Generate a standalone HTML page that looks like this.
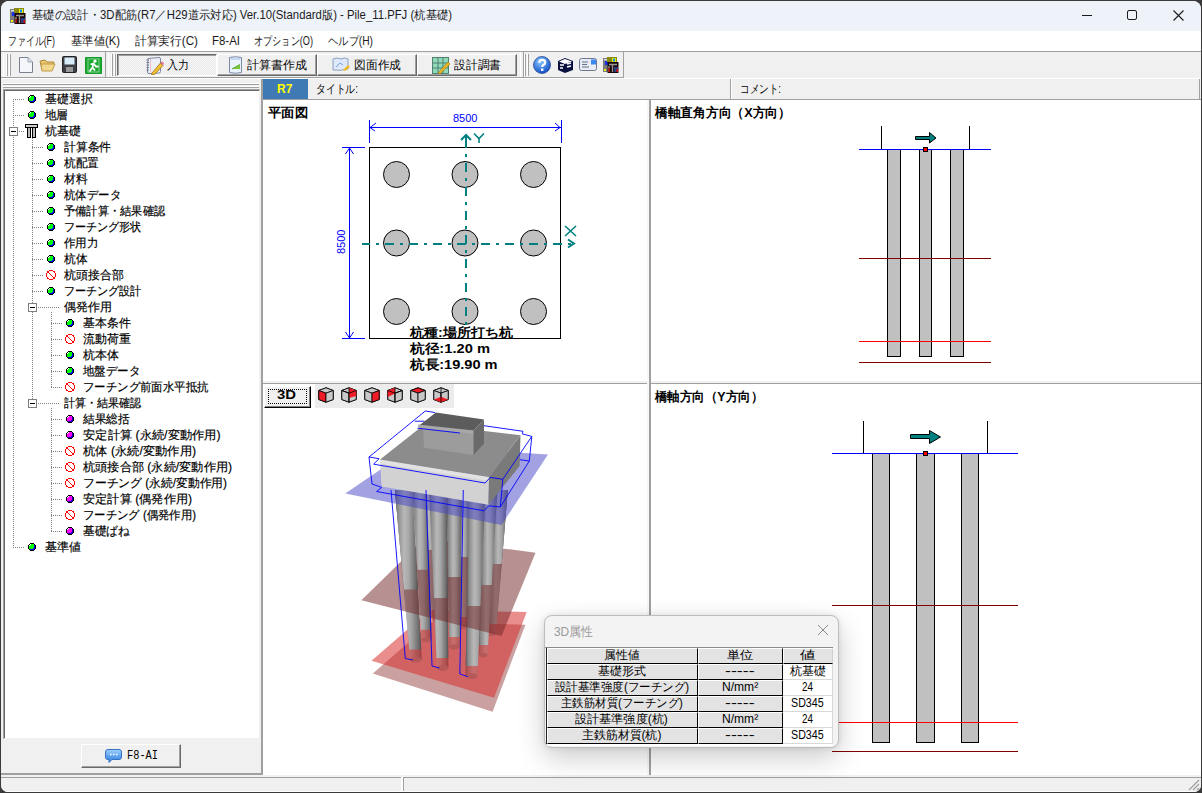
<!DOCTYPE html><html><head><meta charset="utf-8"><style>
*{box-sizing:border-box;margin:0;padding:0}
html,body{width:1202px;height:793px;overflow:hidden;background:#3a3a3a;font-family:"Liberation Sans",sans-serif;color:#000}
.a{position:absolute}
.t{position:absolute;white-space:nowrap;line-height:1;transform-origin:0 0}
#win{position:absolute;left:1px;top:1px;width:1200px;height:791px;background:#f0f0f0;border-radius:8px 8px 7px 7px;overflow:hidden}
.hl{position:absolute;height:1px}
.vl{position:absolute;width:1px}
</style></head><body><div id="win">
<div class="a" style="left:0px;top:0px;width:1200px;height:30px;background:#eef2f9"></div>
<div class="t" id="x1" style="left:31px;top:8px;font-size:12px;transform:scaleX(0.9448);color:#1b1b1b">基礎の設計・3D配筋(R7／H29道示対応) Ver.10(Standard版) - Pile_11.PFJ (杭基礎)</div>
<svg class="a" style="left:9px;top:7px;" width="16" height="16" viewBox="0 0 16 16"><rect x="0" y="1" width="8" height="14" fill="#7a7a7a"/><rect x="1" y="2" width="7" height="1.5" fill="#ddd"/><rect x="2" y="4" width="3" height="4" fill="#1530f0"/><rect x="1" y="12" width="2" height="2" fill="#ee0"/><rect x="4" y="0" width="10" height="5" fill="#8a8a10"/><rect x="9" y="1" width="4" height="4" fill="#ee0"/><rect x="10" y="1.5" width="2" height="3" fill="#18f"/><rect x="4.5" y="5" width="11" height="11" fill="#1a0808"/><path d="M6 9V15M9.5 7V15M6 7.5H14" stroke="#999" stroke-width="1.3"/><rect x="5.5" y="11" width="1.5" height="4" fill="#a00"/><rect x="11" y="10" width="4" height="5" fill="#2a3a80"/><rect x="13.5" y="12" width="1.5" height="3" fill="#d00"/></svg>
<div class="a" style="left:1081px;top:14px;width:10px;height:1px;background:#1b1b1b"></div>
<div class="a" style="left:1126px;top:9px;width:10px;height:10px;border:1px solid #1b1b1b;border-radius:2px"></div>
<svg class="a" style="left:1171px;top:8px" width="13" height="13"><path d="M1.5 1.5L11.5 11.5M11.5 1.5L1.5 11.5" stroke="#1b1b1b" stroke-width="1.1"/></svg>
<div class="a" style="left:0px;top:30px;width:1200px;height:20px;background:#fff"></div>
<div class="a" style="left:0px;top:50px;width:1200px;height:1px;background:#a0a0a0"></div>
<div class="t" id="x2" style="left:7px;top:34px;font-size:12px;transform:scaleX(0.7422);color:#1b1b1b">ファイル(F)</div>
<div class="t" id="x3" style="left:70px;top:34px;font-size:12px;transform:scaleX(0.9423);color:#1b1b1b">基準値(K)</div>
<div class="t" id="x4" style="left:134px;top:34px;font-size:12px;transform:scaleX(0.9741);color:#1b1b1b">計算実行(C)</div>
<div class="t" id="x5" style="left:211px;top:34px;font-size:12px;transform:scaleX(0.9542);color:#1b1b1b">F8-AI</div>
<div class="t" id="x6" style="left:253px;top:34px;font-size:12px;transform:scaleX(0.7630);color:#1b1b1b">オプション(O)</div>
<div class="t" id="x7" style="left:327px;top:34px;font-size:12px;transform:scaleX(0.8543);color:#1b1b1b">ヘルプ(H)</div>
<div class="a" style="left:0px;top:51px;width:1200px;height:25px;background:#f0f0f0"></div>
<div class="a" style="left:0px;top:76px;width:623px;height:1px;background:#a0a0a0"></div>
<div class="a" style="left:0px;top:77px;width:1200px;height:1px;background:#fff"></div>
<div class="a" style="left:2px;top:51px;width:103px;height:25px;border-right:1px solid #a0a0a0;border-left:1px solid #fff"></div>
<div class="a" style="left:107px;top:51px;width:416px;height:25px;border-right:1px solid #a0a0a0;border-left:1px solid #fff"></div>
<div class="a" style="left:519px;top:51px;width:104px;height:25px;border-right:1px solid #a0a0a0;border-left:1px solid #fff"></div>
<div class="a" style="left:5px;top:53px;width:2px;height:22px;border-left:1px solid #fff;border-right:1px solid #a0a0a0"></div>
<div class="a" style="left:8px;top:53px;width:2px;height:22px;border-left:1px solid #fff;border-right:1px solid #a0a0a0"></div>
<div class="a" style="left:110px;top:53px;width:2px;height:22px;border-left:1px solid #fff;border-right:1px solid #a0a0a0"></div>
<div class="a" style="left:113px;top:53px;width:2px;height:22px;border-left:1px solid #fff;border-right:1px solid #a0a0a0"></div>
<div class="a" style="left:523px;top:53px;width:2px;height:22px;border-left:1px solid #fff;border-right:1px solid #a0a0a0"></div>
<div class="a" style="left:526px;top:53px;width:2px;height:22px;border-left:1px solid #fff;border-right:1px solid #a0a0a0"></div>
<svg class="a" style="left:17px;top:55px;" width="16" height="18" viewBox="0 0 16 18"><path d="M1.5 1.5H10L14.5 6V16.5H1.5Z" fill="#f4f6fc" stroke="#7a8090"/><path d="M10 1.5V6H14.5" fill="#dde" stroke="#9aa"/></svg>
<svg class="a" style="left:38px;top:55px;" width="17" height="17" viewBox="0 0 17 17"><path d="M1 5L6 4L8 6H15L13 14H3Z" fill="#e8c46a" stroke="#b08a3a"/><path d="M2 8H16L13 15H3Z" fill="#f2d88c" stroke="#c09a4a"/></svg>
<svg class="a" style="left:61px;top:55px;" width="16" height="18" viewBox="0 0 16 18"><rect x="0.5" y="0.5" width="14" height="16" rx="1" fill="#3c4046" stroke="#222"/><rect x="2.5" y="1.5" width="10" height="7" fill="#d8ecf8"/><rect x="4" y="11" width="7" height="5" fill="#999"/></svg>
<svg class="a" style="left:84px;top:56px;" width="17" height="17" viewBox="0 0 17 17"><rect x="0" y="0" width="17" height="17" rx="1" fill="#149a28"/><rect x="1" y="1" width="15" height="15" fill="#1aa830"/><rect x="3" y="2" width="11" height="13" fill="none" stroke="#fff" stroke-width=".8" opacity=".6"/><circle cx="10" cy="4.2" r="1.6" fill="#fff"/><path d="M5.5 7.5L8.5 6.5L11 9.5L13.5 9.5M8.5 6.5L7.5 10.5L10 13.5M7.5 10.5L4.5 14.5" stroke="#fff" stroke-width="1.8" fill="none"/></svg>
<div class="a" style="left:116px;top:53px;width:100px;height:22px;border-top:1px solid #696969;border-left:1px solid #696969;border-right:1px solid #fff;border-bottom:1px solid #fff;background:repeating-conic-gradient(#fafafa 0 25%,#e6e6e6 0 50%) 0 0/2px 2px"></div>
<div class="a" style="left:117px;top:54px;width:98px;height:20px;border-top:1px solid #a0a0a0;border-left:1px solid #a0a0a0"></div>
<div class="a" style="left:216px;top:53px;width:100px;height:22px;background:#f0f0f0;border-top:1px solid #fff;border-left:1px solid #fff;border-right:1px solid #696969;border-bottom:1px solid #696969"></div>
<div class="a" style="left:217px;top:54px;width:98px;height:20px;border-right:1px solid #a0a0a0;border-bottom:1px solid #a0a0a0"></div>
<div class="a" style="left:316px;top:53px;width:100px;height:22px;background:#f0f0f0;border-top:1px solid #fff;border-left:1px solid #fff;border-right:1px solid #696969;border-bottom:1px solid #696969"></div>
<div class="a" style="left:317px;top:54px;width:98px;height:20px;border-right:1px solid #a0a0a0;border-bottom:1px solid #a0a0a0"></div>
<div class="a" style="left:416px;top:53px;width:100px;height:22px;background:#f0f0f0;border-top:1px solid #fff;border-left:1px solid #fff;border-right:1px solid #696969;border-bottom:1px solid #696969"></div>
<div class="a" style="left:417px;top:54px;width:98px;height:20px;border-right:1px solid #a0a0a0;border-bottom:1px solid #a0a0a0"></div>
<svg class="a" style="left:144px;top:55px;" width="19" height="19" viewBox="0 0 19 19"><path d="M3 2.5L14 1.5Q15.5 1.5 15.5 3V15.5Q15.5 17 14 17L4 17.5Q2.5 17.5 2.5 16Z" fill="#eef0f8" stroke="#8088a0"/><path d="M1.5 4h2.5M1.5 6.5h2.5M1.5 9h2.5M1.5 11.5h2.5M1.5 14h2.5" stroke="#6a7088" stroke-width=".9"/><path d="M5.5 3V16" stroke="#e8a0a0" stroke-width=".6"/><path d="M7 17L15.5 7L18 9.5L9.5 18.5L6.5 19Z" fill="#f2c030" stroke="#906010" stroke-width=".7"/><path d="M15.5 7L17 5.2L19 7.5L18 9.5Z" fill="#e07090"/></svg>
<div class="t" id="x8" style="left:166px;top:58px;font-size:12px;transform:scaleX(0.9167);">入力</div>
<svg class="a" style="left:226px;top:55px;" width="17" height="18" viewBox="0 0 17 18"><path d="M2.5 1.5Q8.5 0 14.5 1.5V16.5Q8.5 18 2.5 16.5Z" fill="#eaf2fc" stroke="#7a8aa8"/><path d="M3.5 3H13.5" stroke="#b8d0f0" stroke-width="1.5"/><path d="M5 13L13 8.5V13Z" fill="#7cc83a"/><path d="M5 13L13 8.5" stroke="#3a9a1a" stroke-width=".8"/></svg>
<div class="t" id="x9" style="left:246px;top:58px;font-size:12px;transform:scaleX(1.0000);">計算書作成</div>
<svg class="a" style="left:330px;top:56px;" width="20" height="15" viewBox="0 0 20 15"><path d="M2 2Q6 0 10 2Q14 0 17 2V12Q10 14 2 13Z" fill="#dfe8f8" stroke="#8aa0c0"/><path d="M5 10L9 6L12 8" stroke="#6fa0e0" fill="none"/><path d="M12 13L17 8L19 10L14 14Z" fill="#f0b820"/></svg>
<div class="t" id="x10" style="left:353px;top:58px;font-size:12px;transform:scaleX(0.9792);">図面作成</div>
<svg class="a" style="left:431px;top:56px;" width="19" height="17" viewBox="0 0 19 17"><rect x="0.5" y="0.5" width="16" height="16" fill="#8fd8b8" stroke="#508070"/><path d="M6 0V17M11 0V17M0 6H17M0 11H17" stroke="#508070"/><path d="M6 16L16 5L18 7L8 17Z" fill="#f0b820" stroke="#a07010" stroke-width=".6"/></svg>
<div class="t" id="x11" style="left:453px;top:58px;font-size:12px;transform:scaleX(0.9792);">設計調書</div>
<svg class="a" style="left:532px;top:55px;" width="19" height="19" viewBox="0 0 19 19"><defs><radialGradient id="hg" cx="40%" cy="30%" r="70%"><stop offset="0" stop-color="#8cc8ff"/><stop offset="1" stop-color="#1250c8"/></radialGradient></defs><circle cx="9" cy="9" r="8.5" fill="url(#hg)" stroke="#2a4a90" stroke-width=".8"/><path d="M6.2 6.8Q6.2 3.8 9.2 3.8Q12.2 3.8 12.2 6.4Q12.2 8 10.2 9Q9.2 9.6 9.2 11" stroke="#fff" stroke-width="2.2" fill="none"/><rect x="8" y="12.5" width="2.4" height="2.4" fill="#fff"/></svg>
<svg class="a" style="left:556px;top:56px;" width="17" height="17" viewBox="0 0 17 17"><path d="M8 1L16 4V13L8 16L1 13V4Z" fill="#0a1040"/><path d="M8 2L15 4.5L8 7L2 4.5Z" fill="#fff"/><path d="M3 8H7M3 11H6M10 7L14 6M10 10L14 9" stroke="#fff" stroke-width="1.3"/></svg>
<svg class="a" style="left:578px;top:57px;" width="18" height="14" viewBox="0 0 18 14"><rect x="0.5" y="0.5" width="17" height="12" rx="2" fill="#e8ecf6" stroke="#707890"/><rect x="12" y="1.5" width="5" height="5" fill="#3a8af0"/><path d="M3 4H9M3 6.5H8M3 9H10" stroke="#6a7080"/></svg>
<svg class="a" style="left:602px;top:56px;" width="16" height="16" viewBox="0 0 16 16"><rect x="0" y="1" width="8" height="14" fill="#7a7a7a"/><rect x="1" y="2" width="7" height="1.5" fill="#ddd"/><rect x="2" y="4" width="3" height="4" fill="#1530f0"/><rect x="1" y="12" width="2" height="2" fill="#ee0"/><rect x="4" y="0" width="10" height="5" fill="#8a8a10"/><rect x="9" y="1" width="4" height="4" fill="#ee0"/><rect x="10" y="1.5" width="2" height="3" fill="#18f"/><rect x="4.5" y="5" width="11" height="11" fill="#1a0808"/><path d="M6 9V15M9.5 7V15M6 7.5H14" stroke="#999" stroke-width="1.3"/><rect x="5.5" y="11" width="1.5" height="4" fill="#a00"/><rect x="11" y="10" width="4" height="5" fill="#2a3a80"/><rect x="13.5" y="12" width="1.5" height="3" fill="#d00"/></svg>
<div class="a" style="left:2px;top:82px;width:256px;height:2px;border-top:1px solid #fff;border-bottom:1px solid #a0a0a0"></div>
<div class="a" style="left:2px;top:85px;width:256px;height:2px;border-top:1px solid #fff;border-bottom:1px solid #a0a0a0"></div>
<div class="a" style="left:0px;top:78px;width:262px;height:696px;border-right:2px solid #a0a0a0;border-bottom:2px solid #a0a0a0"></div>
<div class="a" style="left:2px;top:88px;width:257px;height:650px;background:#fff;border-top:2px solid #a0a0a0;border-left:2px solid #a0a0a0;border-right:1px solid #f0f0f0;border-bottom:1px solid #f0f0f0"></div>
<div class="a" style="left:3px;top:89px;width:255px;height:648px;border-top:1px solid #696969;border-left:1px solid #696969"></div>
<svg class="a" style="left:27px;top:94px;" width="8" height="8" viewBox="0 0 8 8"><g shape-rendering="crispEdges"><rect x="2" y="0" width="1" height="1" fill="#000"/><rect x="3" y="0" width="1" height="1" fill="#000"/><rect x="4" y="0" width="1" height="1" fill="#000"/><rect x="5" y="0" width="1" height="1" fill="#000"/><rect x="1" y="1" width="1" height="1" fill="#000"/><rect x="2" y="1" width="1" height="1" fill="#fff"/><rect x="3" y="1" width="1" height="1" fill="#00ff00"/><rect x="4" y="1" width="1" height="1" fill="#00ff00"/><rect x="5" y="1" width="1" height="1" fill="#00ff00"/><rect x="6" y="1" width="1" height="1" fill="#000"/><rect x="0" y="2" width="1" height="1" fill="#000"/><rect x="1" y="2" width="1" height="1" fill="#fff"/><rect x="2" y="2" width="1" height="1" fill="#00ff00"/><rect x="3" y="2" width="1" height="1" fill="#00ff00"/><rect x="4" y="2" width="1" height="1" fill="#00ff00"/><rect x="5" y="2" width="1" height="1" fill="#00ff00"/><rect x="6" y="2" width="1" height="1" fill="#0000ff"/><rect x="7" y="2" width="1" height="1" fill="#000"/><rect x="0" y="3" width="1" height="1" fill="#000"/><rect x="1" y="3" width="1" height="1" fill="#00ff00"/><rect x="2" y="3" width="1" height="1" fill="#00ff00"/><rect x="3" y="3" width="1" height="1" fill="#00ff00"/><rect x="4" y="3" width="1" height="1" fill="#00ff00"/><rect x="5" y="3" width="1" height="1" fill="#00ff00"/><rect x="6" y="3" width="1" height="1" fill="#0000ff"/><rect x="7" y="3" width="1" height="1" fill="#000"/><rect x="0" y="4" width="1" height="1" fill="#000"/><rect x="1" y="4" width="1" height="1" fill="#00ff00"/><rect x="2" y="4" width="1" height="1" fill="#00ff00"/><rect x="3" y="4" width="1" height="1" fill="#00ff00"/><rect x="4" y="4" width="1" height="1" fill="#00ff00"/><rect x="5" y="4" width="1" height="1" fill="#00ff00"/><rect x="6" y="4" width="1" height="1" fill="#0000ff"/><rect x="7" y="4" width="1" height="1" fill="#000"/><rect x="0" y="5" width="1" height="1" fill="#000"/><rect x="1" y="5" width="1" height="1" fill="#00ff00"/><rect x="2" y="5" width="1" height="1" fill="#00ff00"/><rect x="3" y="5" width="1" height="1" fill="#00ff00"/><rect x="4" y="5" width="1" height="1" fill="#00ff00"/><rect x="5" y="5" width="1" height="1" fill="#0000ff"/><rect x="6" y="5" width="1" height="1" fill="#0000ff"/><rect x="7" y="5" width="1" height="1" fill="#000"/><rect x="1" y="6" width="1" height="1" fill="#000"/><rect x="2" y="6" width="1" height="1" fill="#0000ff"/><rect x="3" y="6" width="1" height="1" fill="#0000ff"/><rect x="4" y="6" width="1" height="1" fill="#0000ff"/><rect x="5" y="6" width="1" height="1" fill="#0000ff"/><rect x="6" y="6" width="1" height="1" fill="#000"/><rect x="2" y="7" width="1" height="1" fill="#000"/><rect x="3" y="7" width="1" height="1" fill="#000"/><rect x="4" y="7" width="1" height="1" fill="#000"/><rect x="5" y="7" width="1" height="1" fill="#000"/></g></svg>
<div class="t" id="x12" style="left:44px;top:92px;font-size:12px;transform:scaleX(0.9917);-webkit-text-stroke:.18px #000">基礎選択</div>
<svg class="a" style="left:27px;top:110px;" width="8" height="8" viewBox="0 0 8 8"><g shape-rendering="crispEdges"><rect x="2" y="0" width="1" height="1" fill="#000"/><rect x="3" y="0" width="1" height="1" fill="#000"/><rect x="4" y="0" width="1" height="1" fill="#000"/><rect x="5" y="0" width="1" height="1" fill="#000"/><rect x="1" y="1" width="1" height="1" fill="#000"/><rect x="2" y="1" width="1" height="1" fill="#fff"/><rect x="3" y="1" width="1" height="1" fill="#00ff00"/><rect x="4" y="1" width="1" height="1" fill="#00ff00"/><rect x="5" y="1" width="1" height="1" fill="#00ff00"/><rect x="6" y="1" width="1" height="1" fill="#000"/><rect x="0" y="2" width="1" height="1" fill="#000"/><rect x="1" y="2" width="1" height="1" fill="#fff"/><rect x="2" y="2" width="1" height="1" fill="#00ff00"/><rect x="3" y="2" width="1" height="1" fill="#00ff00"/><rect x="4" y="2" width="1" height="1" fill="#00ff00"/><rect x="5" y="2" width="1" height="1" fill="#00ff00"/><rect x="6" y="2" width="1" height="1" fill="#0000ff"/><rect x="7" y="2" width="1" height="1" fill="#000"/><rect x="0" y="3" width="1" height="1" fill="#000"/><rect x="1" y="3" width="1" height="1" fill="#00ff00"/><rect x="2" y="3" width="1" height="1" fill="#00ff00"/><rect x="3" y="3" width="1" height="1" fill="#00ff00"/><rect x="4" y="3" width="1" height="1" fill="#00ff00"/><rect x="5" y="3" width="1" height="1" fill="#00ff00"/><rect x="6" y="3" width="1" height="1" fill="#0000ff"/><rect x="7" y="3" width="1" height="1" fill="#000"/><rect x="0" y="4" width="1" height="1" fill="#000"/><rect x="1" y="4" width="1" height="1" fill="#00ff00"/><rect x="2" y="4" width="1" height="1" fill="#00ff00"/><rect x="3" y="4" width="1" height="1" fill="#00ff00"/><rect x="4" y="4" width="1" height="1" fill="#00ff00"/><rect x="5" y="4" width="1" height="1" fill="#00ff00"/><rect x="6" y="4" width="1" height="1" fill="#0000ff"/><rect x="7" y="4" width="1" height="1" fill="#000"/><rect x="0" y="5" width="1" height="1" fill="#000"/><rect x="1" y="5" width="1" height="1" fill="#00ff00"/><rect x="2" y="5" width="1" height="1" fill="#00ff00"/><rect x="3" y="5" width="1" height="1" fill="#00ff00"/><rect x="4" y="5" width="1" height="1" fill="#00ff00"/><rect x="5" y="5" width="1" height="1" fill="#0000ff"/><rect x="6" y="5" width="1" height="1" fill="#0000ff"/><rect x="7" y="5" width="1" height="1" fill="#000"/><rect x="1" y="6" width="1" height="1" fill="#000"/><rect x="2" y="6" width="1" height="1" fill="#0000ff"/><rect x="3" y="6" width="1" height="1" fill="#0000ff"/><rect x="4" y="6" width="1" height="1" fill="#0000ff"/><rect x="5" y="6" width="1" height="1" fill="#0000ff"/><rect x="6" y="6" width="1" height="1" fill="#000"/><rect x="2" y="7" width="1" height="1" fill="#000"/><rect x="3" y="7" width="1" height="1" fill="#000"/><rect x="4" y="7" width="1" height="1" fill="#000"/><rect x="5" y="7" width="1" height="1" fill="#000"/></g></svg>
<div class="t" id="x13" style="left:44px;top:108px;font-size:12px;transform:scaleX(0.9583);-webkit-text-stroke:.18px #000">地層</div>
<svg class="a" style="left:24px;top:123px;" width="13" height="14" viewBox="0 0 13 14"><rect x="0.5" y="0.5" width="12" height="3" fill="#ccc" stroke="#000"/><rect x="2.5" y="3.5" width="3" height="10" fill="#bbb" stroke="#000"/><rect x="7.5" y="3.5" width="3" height="10" fill="#bbb" stroke="#000"/></svg>
<div class="t" id="x14" style="left:44px;top:124px;font-size:12px;transform:scaleX(0.9861);-webkit-text-stroke:.18px #000">杭基礎</div>
<svg class="a" style="left:46px;top:142px;" width="8" height="8" viewBox="0 0 8 8"><g shape-rendering="crispEdges"><rect x="2" y="0" width="1" height="1" fill="#000"/><rect x="3" y="0" width="1" height="1" fill="#000"/><rect x="4" y="0" width="1" height="1" fill="#000"/><rect x="5" y="0" width="1" height="1" fill="#000"/><rect x="1" y="1" width="1" height="1" fill="#000"/><rect x="2" y="1" width="1" height="1" fill="#fff"/><rect x="3" y="1" width="1" height="1" fill="#00ff00"/><rect x="4" y="1" width="1" height="1" fill="#00ff00"/><rect x="5" y="1" width="1" height="1" fill="#00ff00"/><rect x="6" y="1" width="1" height="1" fill="#000"/><rect x="0" y="2" width="1" height="1" fill="#000"/><rect x="1" y="2" width="1" height="1" fill="#fff"/><rect x="2" y="2" width="1" height="1" fill="#00ff00"/><rect x="3" y="2" width="1" height="1" fill="#00ff00"/><rect x="4" y="2" width="1" height="1" fill="#00ff00"/><rect x="5" y="2" width="1" height="1" fill="#00ff00"/><rect x="6" y="2" width="1" height="1" fill="#0000ff"/><rect x="7" y="2" width="1" height="1" fill="#000"/><rect x="0" y="3" width="1" height="1" fill="#000"/><rect x="1" y="3" width="1" height="1" fill="#00ff00"/><rect x="2" y="3" width="1" height="1" fill="#00ff00"/><rect x="3" y="3" width="1" height="1" fill="#00ff00"/><rect x="4" y="3" width="1" height="1" fill="#00ff00"/><rect x="5" y="3" width="1" height="1" fill="#00ff00"/><rect x="6" y="3" width="1" height="1" fill="#0000ff"/><rect x="7" y="3" width="1" height="1" fill="#000"/><rect x="0" y="4" width="1" height="1" fill="#000"/><rect x="1" y="4" width="1" height="1" fill="#00ff00"/><rect x="2" y="4" width="1" height="1" fill="#00ff00"/><rect x="3" y="4" width="1" height="1" fill="#00ff00"/><rect x="4" y="4" width="1" height="1" fill="#00ff00"/><rect x="5" y="4" width="1" height="1" fill="#00ff00"/><rect x="6" y="4" width="1" height="1" fill="#0000ff"/><rect x="7" y="4" width="1" height="1" fill="#000"/><rect x="0" y="5" width="1" height="1" fill="#000"/><rect x="1" y="5" width="1" height="1" fill="#00ff00"/><rect x="2" y="5" width="1" height="1" fill="#00ff00"/><rect x="3" y="5" width="1" height="1" fill="#00ff00"/><rect x="4" y="5" width="1" height="1" fill="#00ff00"/><rect x="5" y="5" width="1" height="1" fill="#0000ff"/><rect x="6" y="5" width="1" height="1" fill="#0000ff"/><rect x="7" y="5" width="1" height="1" fill="#000"/><rect x="1" y="6" width="1" height="1" fill="#000"/><rect x="2" y="6" width="1" height="1" fill="#0000ff"/><rect x="3" y="6" width="1" height="1" fill="#0000ff"/><rect x="4" y="6" width="1" height="1" fill="#0000ff"/><rect x="5" y="6" width="1" height="1" fill="#0000ff"/><rect x="6" y="6" width="1" height="1" fill="#000"/><rect x="2" y="7" width="1" height="1" fill="#000"/><rect x="3" y="7" width="1" height="1" fill="#000"/><rect x="4" y="7" width="1" height="1" fill="#000"/><rect x="5" y="7" width="1" height="1" fill="#000"/></g></svg>
<div class="t" id="x15" style="left:63px;top:140px;font-size:12px;transform:scaleX(0.9792);-webkit-text-stroke:.18px #000">計算条件</div>
<svg class="a" style="left:46px;top:158px;" width="8" height="8" viewBox="0 0 8 8"><g shape-rendering="crispEdges"><rect x="2" y="0" width="1" height="1" fill="#000"/><rect x="3" y="0" width="1" height="1" fill="#000"/><rect x="4" y="0" width="1" height="1" fill="#000"/><rect x="5" y="0" width="1" height="1" fill="#000"/><rect x="1" y="1" width="1" height="1" fill="#000"/><rect x="2" y="1" width="1" height="1" fill="#fff"/><rect x="3" y="1" width="1" height="1" fill="#00ff00"/><rect x="4" y="1" width="1" height="1" fill="#00ff00"/><rect x="5" y="1" width="1" height="1" fill="#00ff00"/><rect x="6" y="1" width="1" height="1" fill="#000"/><rect x="0" y="2" width="1" height="1" fill="#000"/><rect x="1" y="2" width="1" height="1" fill="#fff"/><rect x="2" y="2" width="1" height="1" fill="#00ff00"/><rect x="3" y="2" width="1" height="1" fill="#00ff00"/><rect x="4" y="2" width="1" height="1" fill="#00ff00"/><rect x="5" y="2" width="1" height="1" fill="#00ff00"/><rect x="6" y="2" width="1" height="1" fill="#0000ff"/><rect x="7" y="2" width="1" height="1" fill="#000"/><rect x="0" y="3" width="1" height="1" fill="#000"/><rect x="1" y="3" width="1" height="1" fill="#00ff00"/><rect x="2" y="3" width="1" height="1" fill="#00ff00"/><rect x="3" y="3" width="1" height="1" fill="#00ff00"/><rect x="4" y="3" width="1" height="1" fill="#00ff00"/><rect x="5" y="3" width="1" height="1" fill="#00ff00"/><rect x="6" y="3" width="1" height="1" fill="#0000ff"/><rect x="7" y="3" width="1" height="1" fill="#000"/><rect x="0" y="4" width="1" height="1" fill="#000"/><rect x="1" y="4" width="1" height="1" fill="#00ff00"/><rect x="2" y="4" width="1" height="1" fill="#00ff00"/><rect x="3" y="4" width="1" height="1" fill="#00ff00"/><rect x="4" y="4" width="1" height="1" fill="#00ff00"/><rect x="5" y="4" width="1" height="1" fill="#00ff00"/><rect x="6" y="4" width="1" height="1" fill="#0000ff"/><rect x="7" y="4" width="1" height="1" fill="#000"/><rect x="0" y="5" width="1" height="1" fill="#000"/><rect x="1" y="5" width="1" height="1" fill="#00ff00"/><rect x="2" y="5" width="1" height="1" fill="#00ff00"/><rect x="3" y="5" width="1" height="1" fill="#00ff00"/><rect x="4" y="5" width="1" height="1" fill="#00ff00"/><rect x="5" y="5" width="1" height="1" fill="#0000ff"/><rect x="6" y="5" width="1" height="1" fill="#0000ff"/><rect x="7" y="5" width="1" height="1" fill="#000"/><rect x="1" y="6" width="1" height="1" fill="#000"/><rect x="2" y="6" width="1" height="1" fill="#0000ff"/><rect x="3" y="6" width="1" height="1" fill="#0000ff"/><rect x="4" y="6" width="1" height="1" fill="#0000ff"/><rect x="5" y="6" width="1" height="1" fill="#0000ff"/><rect x="6" y="6" width="1" height="1" fill="#000"/><rect x="2" y="7" width="1" height="1" fill="#000"/><rect x="3" y="7" width="1" height="1" fill="#000"/><rect x="4" y="7" width="1" height="1" fill="#000"/><rect x="5" y="7" width="1" height="1" fill="#000"/></g></svg>
<div class="t" id="x16" style="left:63px;top:156px;font-size:12px;transform:scaleX(0.9722);-webkit-text-stroke:.18px #000">杭配置</div>
<svg class="a" style="left:46px;top:174px;" width="8" height="8" viewBox="0 0 8 8"><g shape-rendering="crispEdges"><rect x="2" y="0" width="1" height="1" fill="#000"/><rect x="3" y="0" width="1" height="1" fill="#000"/><rect x="4" y="0" width="1" height="1" fill="#000"/><rect x="5" y="0" width="1" height="1" fill="#000"/><rect x="1" y="1" width="1" height="1" fill="#000"/><rect x="2" y="1" width="1" height="1" fill="#fff"/><rect x="3" y="1" width="1" height="1" fill="#00ff00"/><rect x="4" y="1" width="1" height="1" fill="#00ff00"/><rect x="5" y="1" width="1" height="1" fill="#00ff00"/><rect x="6" y="1" width="1" height="1" fill="#000"/><rect x="0" y="2" width="1" height="1" fill="#000"/><rect x="1" y="2" width="1" height="1" fill="#fff"/><rect x="2" y="2" width="1" height="1" fill="#00ff00"/><rect x="3" y="2" width="1" height="1" fill="#00ff00"/><rect x="4" y="2" width="1" height="1" fill="#00ff00"/><rect x="5" y="2" width="1" height="1" fill="#00ff00"/><rect x="6" y="2" width="1" height="1" fill="#0000ff"/><rect x="7" y="2" width="1" height="1" fill="#000"/><rect x="0" y="3" width="1" height="1" fill="#000"/><rect x="1" y="3" width="1" height="1" fill="#00ff00"/><rect x="2" y="3" width="1" height="1" fill="#00ff00"/><rect x="3" y="3" width="1" height="1" fill="#00ff00"/><rect x="4" y="3" width="1" height="1" fill="#00ff00"/><rect x="5" y="3" width="1" height="1" fill="#00ff00"/><rect x="6" y="3" width="1" height="1" fill="#0000ff"/><rect x="7" y="3" width="1" height="1" fill="#000"/><rect x="0" y="4" width="1" height="1" fill="#000"/><rect x="1" y="4" width="1" height="1" fill="#00ff00"/><rect x="2" y="4" width="1" height="1" fill="#00ff00"/><rect x="3" y="4" width="1" height="1" fill="#00ff00"/><rect x="4" y="4" width="1" height="1" fill="#00ff00"/><rect x="5" y="4" width="1" height="1" fill="#00ff00"/><rect x="6" y="4" width="1" height="1" fill="#0000ff"/><rect x="7" y="4" width="1" height="1" fill="#000"/><rect x="0" y="5" width="1" height="1" fill="#000"/><rect x="1" y="5" width="1" height="1" fill="#00ff00"/><rect x="2" y="5" width="1" height="1" fill="#00ff00"/><rect x="3" y="5" width="1" height="1" fill="#00ff00"/><rect x="4" y="5" width="1" height="1" fill="#00ff00"/><rect x="5" y="5" width="1" height="1" fill="#0000ff"/><rect x="6" y="5" width="1" height="1" fill="#0000ff"/><rect x="7" y="5" width="1" height="1" fill="#000"/><rect x="1" y="6" width="1" height="1" fill="#000"/><rect x="2" y="6" width="1" height="1" fill="#0000ff"/><rect x="3" y="6" width="1" height="1" fill="#0000ff"/><rect x="4" y="6" width="1" height="1" fill="#0000ff"/><rect x="5" y="6" width="1" height="1" fill="#0000ff"/><rect x="6" y="6" width="1" height="1" fill="#000"/><rect x="2" y="7" width="1" height="1" fill="#000"/><rect x="3" y="7" width="1" height="1" fill="#000"/><rect x="4" y="7" width="1" height="1" fill="#000"/><rect x="5" y="7" width="1" height="1" fill="#000"/></g></svg>
<div class="t" id="x17" style="left:63px;top:172px;font-size:12px;transform:scaleX(0.9750);-webkit-text-stroke:.18px #000">材料</div>
<svg class="a" style="left:46px;top:190px;" width="8" height="8" viewBox="0 0 8 8"><g shape-rendering="crispEdges"><rect x="2" y="0" width="1" height="1" fill="#000"/><rect x="3" y="0" width="1" height="1" fill="#000"/><rect x="4" y="0" width="1" height="1" fill="#000"/><rect x="5" y="0" width="1" height="1" fill="#000"/><rect x="1" y="1" width="1" height="1" fill="#000"/><rect x="2" y="1" width="1" height="1" fill="#fff"/><rect x="3" y="1" width="1" height="1" fill="#00ff00"/><rect x="4" y="1" width="1" height="1" fill="#00ff00"/><rect x="5" y="1" width="1" height="1" fill="#00ff00"/><rect x="6" y="1" width="1" height="1" fill="#000"/><rect x="0" y="2" width="1" height="1" fill="#000"/><rect x="1" y="2" width="1" height="1" fill="#fff"/><rect x="2" y="2" width="1" height="1" fill="#00ff00"/><rect x="3" y="2" width="1" height="1" fill="#00ff00"/><rect x="4" y="2" width="1" height="1" fill="#00ff00"/><rect x="5" y="2" width="1" height="1" fill="#00ff00"/><rect x="6" y="2" width="1" height="1" fill="#0000ff"/><rect x="7" y="2" width="1" height="1" fill="#000"/><rect x="0" y="3" width="1" height="1" fill="#000"/><rect x="1" y="3" width="1" height="1" fill="#00ff00"/><rect x="2" y="3" width="1" height="1" fill="#00ff00"/><rect x="3" y="3" width="1" height="1" fill="#00ff00"/><rect x="4" y="3" width="1" height="1" fill="#00ff00"/><rect x="5" y="3" width="1" height="1" fill="#00ff00"/><rect x="6" y="3" width="1" height="1" fill="#0000ff"/><rect x="7" y="3" width="1" height="1" fill="#000"/><rect x="0" y="4" width="1" height="1" fill="#000"/><rect x="1" y="4" width="1" height="1" fill="#00ff00"/><rect x="2" y="4" width="1" height="1" fill="#00ff00"/><rect x="3" y="4" width="1" height="1" fill="#00ff00"/><rect x="4" y="4" width="1" height="1" fill="#00ff00"/><rect x="5" y="4" width="1" height="1" fill="#00ff00"/><rect x="6" y="4" width="1" height="1" fill="#0000ff"/><rect x="7" y="4" width="1" height="1" fill="#000"/><rect x="0" y="5" width="1" height="1" fill="#000"/><rect x="1" y="5" width="1" height="1" fill="#00ff00"/><rect x="2" y="5" width="1" height="1" fill="#00ff00"/><rect x="3" y="5" width="1" height="1" fill="#00ff00"/><rect x="4" y="5" width="1" height="1" fill="#00ff00"/><rect x="5" y="5" width="1" height="1" fill="#0000ff"/><rect x="6" y="5" width="1" height="1" fill="#0000ff"/><rect x="7" y="5" width="1" height="1" fill="#000"/><rect x="1" y="6" width="1" height="1" fill="#000"/><rect x="2" y="6" width="1" height="1" fill="#0000ff"/><rect x="3" y="6" width="1" height="1" fill="#0000ff"/><rect x="4" y="6" width="1" height="1" fill="#0000ff"/><rect x="5" y="6" width="1" height="1" fill="#0000ff"/><rect x="6" y="6" width="1" height="1" fill="#000"/><rect x="2" y="7" width="1" height="1" fill="#000"/><rect x="3" y="7" width="1" height="1" fill="#000"/><rect x="4" y="7" width="1" height="1" fill="#000"/><rect x="5" y="7" width="1" height="1" fill="#000"/></g></svg>
<div class="t" id="x18" style="left:63px;top:188px;font-size:12px;transform:scaleX(0.9500);-webkit-text-stroke:.18px #000">杭体データ</div>
<svg class="a" style="left:46px;top:206px;" width="8" height="8" viewBox="0 0 8 8"><g shape-rendering="crispEdges"><rect x="2" y="0" width="1" height="1" fill="#000"/><rect x="3" y="0" width="1" height="1" fill="#000"/><rect x="4" y="0" width="1" height="1" fill="#000"/><rect x="5" y="0" width="1" height="1" fill="#000"/><rect x="1" y="1" width="1" height="1" fill="#000"/><rect x="2" y="1" width="1" height="1" fill="#fff"/><rect x="3" y="1" width="1" height="1" fill="#00ff00"/><rect x="4" y="1" width="1" height="1" fill="#00ff00"/><rect x="5" y="1" width="1" height="1" fill="#00ff00"/><rect x="6" y="1" width="1" height="1" fill="#000"/><rect x="0" y="2" width="1" height="1" fill="#000"/><rect x="1" y="2" width="1" height="1" fill="#fff"/><rect x="2" y="2" width="1" height="1" fill="#00ff00"/><rect x="3" y="2" width="1" height="1" fill="#00ff00"/><rect x="4" y="2" width="1" height="1" fill="#00ff00"/><rect x="5" y="2" width="1" height="1" fill="#00ff00"/><rect x="6" y="2" width="1" height="1" fill="#0000ff"/><rect x="7" y="2" width="1" height="1" fill="#000"/><rect x="0" y="3" width="1" height="1" fill="#000"/><rect x="1" y="3" width="1" height="1" fill="#00ff00"/><rect x="2" y="3" width="1" height="1" fill="#00ff00"/><rect x="3" y="3" width="1" height="1" fill="#00ff00"/><rect x="4" y="3" width="1" height="1" fill="#00ff00"/><rect x="5" y="3" width="1" height="1" fill="#00ff00"/><rect x="6" y="3" width="1" height="1" fill="#0000ff"/><rect x="7" y="3" width="1" height="1" fill="#000"/><rect x="0" y="4" width="1" height="1" fill="#000"/><rect x="1" y="4" width="1" height="1" fill="#00ff00"/><rect x="2" y="4" width="1" height="1" fill="#00ff00"/><rect x="3" y="4" width="1" height="1" fill="#00ff00"/><rect x="4" y="4" width="1" height="1" fill="#00ff00"/><rect x="5" y="4" width="1" height="1" fill="#00ff00"/><rect x="6" y="4" width="1" height="1" fill="#0000ff"/><rect x="7" y="4" width="1" height="1" fill="#000"/><rect x="0" y="5" width="1" height="1" fill="#000"/><rect x="1" y="5" width="1" height="1" fill="#00ff00"/><rect x="2" y="5" width="1" height="1" fill="#00ff00"/><rect x="3" y="5" width="1" height="1" fill="#00ff00"/><rect x="4" y="5" width="1" height="1" fill="#00ff00"/><rect x="5" y="5" width="1" height="1" fill="#0000ff"/><rect x="6" y="5" width="1" height="1" fill="#0000ff"/><rect x="7" y="5" width="1" height="1" fill="#000"/><rect x="1" y="6" width="1" height="1" fill="#000"/><rect x="2" y="6" width="1" height="1" fill="#0000ff"/><rect x="3" y="6" width="1" height="1" fill="#0000ff"/><rect x="4" y="6" width="1" height="1" fill="#0000ff"/><rect x="5" y="6" width="1" height="1" fill="#0000ff"/><rect x="6" y="6" width="1" height="1" fill="#000"/><rect x="2" y="7" width="1" height="1" fill="#000"/><rect x="3" y="7" width="1" height="1" fill="#000"/><rect x="4" y="7" width="1" height="1" fill="#000"/><rect x="5" y="7" width="1" height="1" fill="#000"/></g></svg>
<div class="t" id="x19" style="left:63px;top:204px;font-size:12px;transform:scaleX(0.9352);-webkit-text-stroke:.18px #000">予備計算・結果確認</div>
<svg class="a" style="left:46px;top:222px;" width="8" height="8" viewBox="0 0 8 8"><g shape-rendering="crispEdges"><rect x="2" y="0" width="1" height="1" fill="#000"/><rect x="3" y="0" width="1" height="1" fill="#000"/><rect x="4" y="0" width="1" height="1" fill="#000"/><rect x="5" y="0" width="1" height="1" fill="#000"/><rect x="1" y="1" width="1" height="1" fill="#000"/><rect x="2" y="1" width="1" height="1" fill="#fff"/><rect x="3" y="1" width="1" height="1" fill="#00ff00"/><rect x="4" y="1" width="1" height="1" fill="#00ff00"/><rect x="5" y="1" width="1" height="1" fill="#00ff00"/><rect x="6" y="1" width="1" height="1" fill="#000"/><rect x="0" y="2" width="1" height="1" fill="#000"/><rect x="1" y="2" width="1" height="1" fill="#fff"/><rect x="2" y="2" width="1" height="1" fill="#00ff00"/><rect x="3" y="2" width="1" height="1" fill="#00ff00"/><rect x="4" y="2" width="1" height="1" fill="#00ff00"/><rect x="5" y="2" width="1" height="1" fill="#00ff00"/><rect x="6" y="2" width="1" height="1" fill="#0000ff"/><rect x="7" y="2" width="1" height="1" fill="#000"/><rect x="0" y="3" width="1" height="1" fill="#000"/><rect x="1" y="3" width="1" height="1" fill="#00ff00"/><rect x="2" y="3" width="1" height="1" fill="#00ff00"/><rect x="3" y="3" width="1" height="1" fill="#00ff00"/><rect x="4" y="3" width="1" height="1" fill="#00ff00"/><rect x="5" y="3" width="1" height="1" fill="#00ff00"/><rect x="6" y="3" width="1" height="1" fill="#0000ff"/><rect x="7" y="3" width="1" height="1" fill="#000"/><rect x="0" y="4" width="1" height="1" fill="#000"/><rect x="1" y="4" width="1" height="1" fill="#00ff00"/><rect x="2" y="4" width="1" height="1" fill="#00ff00"/><rect x="3" y="4" width="1" height="1" fill="#00ff00"/><rect x="4" y="4" width="1" height="1" fill="#00ff00"/><rect x="5" y="4" width="1" height="1" fill="#00ff00"/><rect x="6" y="4" width="1" height="1" fill="#0000ff"/><rect x="7" y="4" width="1" height="1" fill="#000"/><rect x="0" y="5" width="1" height="1" fill="#000"/><rect x="1" y="5" width="1" height="1" fill="#00ff00"/><rect x="2" y="5" width="1" height="1" fill="#00ff00"/><rect x="3" y="5" width="1" height="1" fill="#00ff00"/><rect x="4" y="5" width="1" height="1" fill="#00ff00"/><rect x="5" y="5" width="1" height="1" fill="#0000ff"/><rect x="6" y="5" width="1" height="1" fill="#0000ff"/><rect x="7" y="5" width="1" height="1" fill="#000"/><rect x="1" y="6" width="1" height="1" fill="#000"/><rect x="2" y="6" width="1" height="1" fill="#0000ff"/><rect x="3" y="6" width="1" height="1" fill="#0000ff"/><rect x="4" y="6" width="1" height="1" fill="#0000ff"/><rect x="5" y="6" width="1" height="1" fill="#0000ff"/><rect x="6" y="6" width="1" height="1" fill="#000"/><rect x="2" y="7" width="1" height="1" fill="#000"/><rect x="3" y="7" width="1" height="1" fill="#000"/><rect x="4" y="7" width="1" height="1" fill="#000"/><rect x="5" y="7" width="1" height="1" fill="#000"/></g></svg>
<div class="t" id="x20" style="left:63px;top:220px;font-size:12px;transform:scaleX(0.9214);-webkit-text-stroke:.18px #000">フーチング形状</div>
<svg class="a" style="left:46px;top:238px;" width="8" height="8" viewBox="0 0 8 8"><g shape-rendering="crispEdges"><rect x="2" y="0" width="1" height="1" fill="#000"/><rect x="3" y="0" width="1" height="1" fill="#000"/><rect x="4" y="0" width="1" height="1" fill="#000"/><rect x="5" y="0" width="1" height="1" fill="#000"/><rect x="1" y="1" width="1" height="1" fill="#000"/><rect x="2" y="1" width="1" height="1" fill="#fff"/><rect x="3" y="1" width="1" height="1" fill="#00ff00"/><rect x="4" y="1" width="1" height="1" fill="#00ff00"/><rect x="5" y="1" width="1" height="1" fill="#00ff00"/><rect x="6" y="1" width="1" height="1" fill="#000"/><rect x="0" y="2" width="1" height="1" fill="#000"/><rect x="1" y="2" width="1" height="1" fill="#fff"/><rect x="2" y="2" width="1" height="1" fill="#00ff00"/><rect x="3" y="2" width="1" height="1" fill="#00ff00"/><rect x="4" y="2" width="1" height="1" fill="#00ff00"/><rect x="5" y="2" width="1" height="1" fill="#00ff00"/><rect x="6" y="2" width="1" height="1" fill="#0000ff"/><rect x="7" y="2" width="1" height="1" fill="#000"/><rect x="0" y="3" width="1" height="1" fill="#000"/><rect x="1" y="3" width="1" height="1" fill="#00ff00"/><rect x="2" y="3" width="1" height="1" fill="#00ff00"/><rect x="3" y="3" width="1" height="1" fill="#00ff00"/><rect x="4" y="3" width="1" height="1" fill="#00ff00"/><rect x="5" y="3" width="1" height="1" fill="#00ff00"/><rect x="6" y="3" width="1" height="1" fill="#0000ff"/><rect x="7" y="3" width="1" height="1" fill="#000"/><rect x="0" y="4" width="1" height="1" fill="#000"/><rect x="1" y="4" width="1" height="1" fill="#00ff00"/><rect x="2" y="4" width="1" height="1" fill="#00ff00"/><rect x="3" y="4" width="1" height="1" fill="#00ff00"/><rect x="4" y="4" width="1" height="1" fill="#00ff00"/><rect x="5" y="4" width="1" height="1" fill="#00ff00"/><rect x="6" y="4" width="1" height="1" fill="#0000ff"/><rect x="7" y="4" width="1" height="1" fill="#000"/><rect x="0" y="5" width="1" height="1" fill="#000"/><rect x="1" y="5" width="1" height="1" fill="#00ff00"/><rect x="2" y="5" width="1" height="1" fill="#00ff00"/><rect x="3" y="5" width="1" height="1" fill="#00ff00"/><rect x="4" y="5" width="1" height="1" fill="#00ff00"/><rect x="5" y="5" width="1" height="1" fill="#0000ff"/><rect x="6" y="5" width="1" height="1" fill="#0000ff"/><rect x="7" y="5" width="1" height="1" fill="#000"/><rect x="1" y="6" width="1" height="1" fill="#000"/><rect x="2" y="6" width="1" height="1" fill="#0000ff"/><rect x="3" y="6" width="1" height="1" fill="#0000ff"/><rect x="4" y="6" width="1" height="1" fill="#0000ff"/><rect x="5" y="6" width="1" height="1" fill="#0000ff"/><rect x="6" y="6" width="1" height="1" fill="#000"/><rect x="2" y="7" width="1" height="1" fill="#000"/><rect x="3" y="7" width="1" height="1" fill="#000"/><rect x="4" y="7" width="1" height="1" fill="#000"/><rect x="5" y="7" width="1" height="1" fill="#000"/></g></svg>
<div class="t" id="x21" style="left:63px;top:236px;font-size:12px;transform:scaleX(0.9583);-webkit-text-stroke:.18px #000">作用力</div>
<svg class="a" style="left:46px;top:254px;" width="8" height="8" viewBox="0 0 8 8"><g shape-rendering="crispEdges"><rect x="2" y="0" width="1" height="1" fill="#000"/><rect x="3" y="0" width="1" height="1" fill="#000"/><rect x="4" y="0" width="1" height="1" fill="#000"/><rect x="5" y="0" width="1" height="1" fill="#000"/><rect x="1" y="1" width="1" height="1" fill="#000"/><rect x="2" y="1" width="1" height="1" fill="#fff"/><rect x="3" y="1" width="1" height="1" fill="#00ff00"/><rect x="4" y="1" width="1" height="1" fill="#00ff00"/><rect x="5" y="1" width="1" height="1" fill="#00ff00"/><rect x="6" y="1" width="1" height="1" fill="#000"/><rect x="0" y="2" width="1" height="1" fill="#000"/><rect x="1" y="2" width="1" height="1" fill="#fff"/><rect x="2" y="2" width="1" height="1" fill="#00ff00"/><rect x="3" y="2" width="1" height="1" fill="#00ff00"/><rect x="4" y="2" width="1" height="1" fill="#00ff00"/><rect x="5" y="2" width="1" height="1" fill="#00ff00"/><rect x="6" y="2" width="1" height="1" fill="#0000ff"/><rect x="7" y="2" width="1" height="1" fill="#000"/><rect x="0" y="3" width="1" height="1" fill="#000"/><rect x="1" y="3" width="1" height="1" fill="#00ff00"/><rect x="2" y="3" width="1" height="1" fill="#00ff00"/><rect x="3" y="3" width="1" height="1" fill="#00ff00"/><rect x="4" y="3" width="1" height="1" fill="#00ff00"/><rect x="5" y="3" width="1" height="1" fill="#00ff00"/><rect x="6" y="3" width="1" height="1" fill="#0000ff"/><rect x="7" y="3" width="1" height="1" fill="#000"/><rect x="0" y="4" width="1" height="1" fill="#000"/><rect x="1" y="4" width="1" height="1" fill="#00ff00"/><rect x="2" y="4" width="1" height="1" fill="#00ff00"/><rect x="3" y="4" width="1" height="1" fill="#00ff00"/><rect x="4" y="4" width="1" height="1" fill="#00ff00"/><rect x="5" y="4" width="1" height="1" fill="#00ff00"/><rect x="6" y="4" width="1" height="1" fill="#0000ff"/><rect x="7" y="4" width="1" height="1" fill="#000"/><rect x="0" y="5" width="1" height="1" fill="#000"/><rect x="1" y="5" width="1" height="1" fill="#00ff00"/><rect x="2" y="5" width="1" height="1" fill="#00ff00"/><rect x="3" y="5" width="1" height="1" fill="#00ff00"/><rect x="4" y="5" width="1" height="1" fill="#00ff00"/><rect x="5" y="5" width="1" height="1" fill="#0000ff"/><rect x="6" y="5" width="1" height="1" fill="#0000ff"/><rect x="7" y="5" width="1" height="1" fill="#000"/><rect x="1" y="6" width="1" height="1" fill="#000"/><rect x="2" y="6" width="1" height="1" fill="#0000ff"/><rect x="3" y="6" width="1" height="1" fill="#0000ff"/><rect x="4" y="6" width="1" height="1" fill="#0000ff"/><rect x="5" y="6" width="1" height="1" fill="#0000ff"/><rect x="6" y="6" width="1" height="1" fill="#000"/><rect x="2" y="7" width="1" height="1" fill="#000"/><rect x="3" y="7" width="1" height="1" fill="#000"/><rect x="4" y="7" width="1" height="1" fill="#000"/><rect x="5" y="7" width="1" height="1" fill="#000"/></g></svg>
<div class="t" id="x22" style="left:63px;top:252px;font-size:12px;transform:scaleX(0.9750);-webkit-text-stroke:.18px #000">杭体</div>
<svg class="a" style="left:45px;top:269px;" width="10" height="10" viewBox="0 0 10 10"><g shape-rendering="crispEdges"><rect x="3" y="0" width="1" height="1" fill="#ff0000"/><rect x="4" y="0" width="1" height="1" fill="#ff0000"/><rect x="5" y="0" width="1" height="1" fill="#ff0000"/><rect x="6" y="0" width="1" height="1" fill="#ff0000"/><rect x="1" y="1" width="1" height="1" fill="#ff0000"/><rect x="2" y="1" width="1" height="1" fill="#ff0000"/><rect x="7" y="1" width="1" height="1" fill="#ff0000"/><rect x="8" y="1" width="1" height="1" fill="#ff0000"/><rect x="1" y="2" width="1" height="1" fill="#ff0000"/><rect x="2" y="2" width="1" height="1" fill="#ff0000"/><rect x="8" y="2" width="1" height="1" fill="#ff0000"/><rect x="0" y="3" width="1" height="1" fill="#ff0000"/><rect x="3" y="3" width="1" height="1" fill="#ff0000"/><rect x="9" y="3" width="1" height="1" fill="#ff0000"/><rect x="0" y="4" width="1" height="1" fill="#ff0000"/><rect x="4" y="4" width="1" height="1" fill="#ff0000"/><rect x="9" y="4" width="1" height="1" fill="#ff0000"/><rect x="0" y="5" width="1" height="1" fill="#ff0000"/><rect x="5" y="5" width="1" height="1" fill="#ff0000"/><rect x="9" y="5" width="1" height="1" fill="#ff0000"/><rect x="0" y="6" width="1" height="1" fill="#ff0000"/><rect x="6" y="6" width="1" height="1" fill="#ff0000"/><rect x="9" y="6" width="1" height="1" fill="#ff0000"/><rect x="1" y="7" width="1" height="1" fill="#ff0000"/><rect x="7" y="7" width="1" height="1" fill="#ff0000"/><rect x="8" y="7" width="1" height="1" fill="#ff0000"/><rect x="1" y="8" width="1" height="1" fill="#ff0000"/><rect x="2" y="8" width="1" height="1" fill="#ff0000"/><rect x="7" y="8" width="1" height="1" fill="#ff0000"/><rect x="8" y="8" width="1" height="1" fill="#ff0000"/><rect x="3" y="9" width="1" height="1" fill="#ff0000"/><rect x="4" y="9" width="1" height="1" fill="#ff0000"/><rect x="5" y="9" width="1" height="1" fill="#ff0000"/><rect x="6" y="9" width="1" height="1" fill="#ff0000"/></g></svg>
<div class="t" id="x23" style="left:63px;top:268px;font-size:12px;transform:scaleX(0.9933);-webkit-text-stroke:.18px #000">杭頭接合部</div>
<svg class="a" style="left:46px;top:286px;" width="8" height="8" viewBox="0 0 8 8"><g shape-rendering="crispEdges"><rect x="2" y="0" width="1" height="1" fill="#000"/><rect x="3" y="0" width="1" height="1" fill="#000"/><rect x="4" y="0" width="1" height="1" fill="#000"/><rect x="5" y="0" width="1" height="1" fill="#000"/><rect x="1" y="1" width="1" height="1" fill="#000"/><rect x="2" y="1" width="1" height="1" fill="#fff"/><rect x="3" y="1" width="1" height="1" fill="#00ff00"/><rect x="4" y="1" width="1" height="1" fill="#00ff00"/><rect x="5" y="1" width="1" height="1" fill="#00ff00"/><rect x="6" y="1" width="1" height="1" fill="#000"/><rect x="0" y="2" width="1" height="1" fill="#000"/><rect x="1" y="2" width="1" height="1" fill="#fff"/><rect x="2" y="2" width="1" height="1" fill="#00ff00"/><rect x="3" y="2" width="1" height="1" fill="#00ff00"/><rect x="4" y="2" width="1" height="1" fill="#00ff00"/><rect x="5" y="2" width="1" height="1" fill="#00ff00"/><rect x="6" y="2" width="1" height="1" fill="#0000ff"/><rect x="7" y="2" width="1" height="1" fill="#000"/><rect x="0" y="3" width="1" height="1" fill="#000"/><rect x="1" y="3" width="1" height="1" fill="#00ff00"/><rect x="2" y="3" width="1" height="1" fill="#00ff00"/><rect x="3" y="3" width="1" height="1" fill="#00ff00"/><rect x="4" y="3" width="1" height="1" fill="#00ff00"/><rect x="5" y="3" width="1" height="1" fill="#00ff00"/><rect x="6" y="3" width="1" height="1" fill="#0000ff"/><rect x="7" y="3" width="1" height="1" fill="#000"/><rect x="0" y="4" width="1" height="1" fill="#000"/><rect x="1" y="4" width="1" height="1" fill="#00ff00"/><rect x="2" y="4" width="1" height="1" fill="#00ff00"/><rect x="3" y="4" width="1" height="1" fill="#00ff00"/><rect x="4" y="4" width="1" height="1" fill="#00ff00"/><rect x="5" y="4" width="1" height="1" fill="#00ff00"/><rect x="6" y="4" width="1" height="1" fill="#0000ff"/><rect x="7" y="4" width="1" height="1" fill="#000"/><rect x="0" y="5" width="1" height="1" fill="#000"/><rect x="1" y="5" width="1" height="1" fill="#00ff00"/><rect x="2" y="5" width="1" height="1" fill="#00ff00"/><rect x="3" y="5" width="1" height="1" fill="#00ff00"/><rect x="4" y="5" width="1" height="1" fill="#00ff00"/><rect x="5" y="5" width="1" height="1" fill="#0000ff"/><rect x="6" y="5" width="1" height="1" fill="#0000ff"/><rect x="7" y="5" width="1" height="1" fill="#000"/><rect x="1" y="6" width="1" height="1" fill="#000"/><rect x="2" y="6" width="1" height="1" fill="#0000ff"/><rect x="3" y="6" width="1" height="1" fill="#0000ff"/><rect x="4" y="6" width="1" height="1" fill="#0000ff"/><rect x="5" y="6" width="1" height="1" fill="#0000ff"/><rect x="6" y="6" width="1" height="1" fill="#000"/><rect x="2" y="7" width="1" height="1" fill="#000"/><rect x="3" y="7" width="1" height="1" fill="#000"/><rect x="4" y="7" width="1" height="1" fill="#000"/><rect x="5" y="7" width="1" height="1" fill="#000"/></g></svg>
<div class="t" id="x24" style="left:63px;top:284px;font-size:12px;transform:scaleX(0.9214);-webkit-text-stroke:.18px #000">フーチング設計</div>
<div class="t" id="x25" style="left:63px;top:300px;font-size:12px;transform:scaleX(1.0000);-webkit-text-stroke:.18px #000">偶発作用</div>
<svg class="a" style="left:65px;top:318px;" width="8" height="8" viewBox="0 0 8 8"><g shape-rendering="crispEdges"><rect x="2" y="0" width="1" height="1" fill="#000"/><rect x="3" y="0" width="1" height="1" fill="#000"/><rect x="4" y="0" width="1" height="1" fill="#000"/><rect x="5" y="0" width="1" height="1" fill="#000"/><rect x="1" y="1" width="1" height="1" fill="#000"/><rect x="2" y="1" width="1" height="1" fill="#fff"/><rect x="3" y="1" width="1" height="1" fill="#00ff00"/><rect x="4" y="1" width="1" height="1" fill="#00ff00"/><rect x="5" y="1" width="1" height="1" fill="#00ff00"/><rect x="6" y="1" width="1" height="1" fill="#000"/><rect x="0" y="2" width="1" height="1" fill="#000"/><rect x="1" y="2" width="1" height="1" fill="#fff"/><rect x="2" y="2" width="1" height="1" fill="#00ff00"/><rect x="3" y="2" width="1" height="1" fill="#00ff00"/><rect x="4" y="2" width="1" height="1" fill="#00ff00"/><rect x="5" y="2" width="1" height="1" fill="#00ff00"/><rect x="6" y="2" width="1" height="1" fill="#0000ff"/><rect x="7" y="2" width="1" height="1" fill="#000"/><rect x="0" y="3" width="1" height="1" fill="#000"/><rect x="1" y="3" width="1" height="1" fill="#00ff00"/><rect x="2" y="3" width="1" height="1" fill="#00ff00"/><rect x="3" y="3" width="1" height="1" fill="#00ff00"/><rect x="4" y="3" width="1" height="1" fill="#00ff00"/><rect x="5" y="3" width="1" height="1" fill="#00ff00"/><rect x="6" y="3" width="1" height="1" fill="#0000ff"/><rect x="7" y="3" width="1" height="1" fill="#000"/><rect x="0" y="4" width="1" height="1" fill="#000"/><rect x="1" y="4" width="1" height="1" fill="#00ff00"/><rect x="2" y="4" width="1" height="1" fill="#00ff00"/><rect x="3" y="4" width="1" height="1" fill="#00ff00"/><rect x="4" y="4" width="1" height="1" fill="#00ff00"/><rect x="5" y="4" width="1" height="1" fill="#00ff00"/><rect x="6" y="4" width="1" height="1" fill="#0000ff"/><rect x="7" y="4" width="1" height="1" fill="#000"/><rect x="0" y="5" width="1" height="1" fill="#000"/><rect x="1" y="5" width="1" height="1" fill="#00ff00"/><rect x="2" y="5" width="1" height="1" fill="#00ff00"/><rect x="3" y="5" width="1" height="1" fill="#00ff00"/><rect x="4" y="5" width="1" height="1" fill="#00ff00"/><rect x="5" y="5" width="1" height="1" fill="#0000ff"/><rect x="6" y="5" width="1" height="1" fill="#0000ff"/><rect x="7" y="5" width="1" height="1" fill="#000"/><rect x="1" y="6" width="1" height="1" fill="#000"/><rect x="2" y="6" width="1" height="1" fill="#0000ff"/><rect x="3" y="6" width="1" height="1" fill="#0000ff"/><rect x="4" y="6" width="1" height="1" fill="#0000ff"/><rect x="5" y="6" width="1" height="1" fill="#0000ff"/><rect x="6" y="6" width="1" height="1" fill="#000"/><rect x="2" y="7" width="1" height="1" fill="#000"/><rect x="3" y="7" width="1" height="1" fill="#000"/><rect x="4" y="7" width="1" height="1" fill="#000"/><rect x="5" y="7" width="1" height="1" fill="#000"/></g></svg>
<div class="t" id="x26" style="left:82px;top:316px;font-size:12px;transform:scaleX(0.9917);-webkit-text-stroke:.18px #000">基本条件</div>
<svg class="a" style="left:64px;top:333px;" width="10" height="10" viewBox="0 0 10 10"><g shape-rendering="crispEdges"><rect x="3" y="0" width="1" height="1" fill="#ff0000"/><rect x="4" y="0" width="1" height="1" fill="#ff0000"/><rect x="5" y="0" width="1" height="1" fill="#ff0000"/><rect x="6" y="0" width="1" height="1" fill="#ff0000"/><rect x="1" y="1" width="1" height="1" fill="#ff0000"/><rect x="2" y="1" width="1" height="1" fill="#ff0000"/><rect x="7" y="1" width="1" height="1" fill="#ff0000"/><rect x="8" y="1" width="1" height="1" fill="#ff0000"/><rect x="1" y="2" width="1" height="1" fill="#ff0000"/><rect x="2" y="2" width="1" height="1" fill="#ff0000"/><rect x="8" y="2" width="1" height="1" fill="#ff0000"/><rect x="0" y="3" width="1" height="1" fill="#ff0000"/><rect x="3" y="3" width="1" height="1" fill="#ff0000"/><rect x="9" y="3" width="1" height="1" fill="#ff0000"/><rect x="0" y="4" width="1" height="1" fill="#ff0000"/><rect x="4" y="4" width="1" height="1" fill="#ff0000"/><rect x="9" y="4" width="1" height="1" fill="#ff0000"/><rect x="0" y="5" width="1" height="1" fill="#ff0000"/><rect x="5" y="5" width="1" height="1" fill="#ff0000"/><rect x="9" y="5" width="1" height="1" fill="#ff0000"/><rect x="0" y="6" width="1" height="1" fill="#ff0000"/><rect x="6" y="6" width="1" height="1" fill="#ff0000"/><rect x="9" y="6" width="1" height="1" fill="#ff0000"/><rect x="1" y="7" width="1" height="1" fill="#ff0000"/><rect x="7" y="7" width="1" height="1" fill="#ff0000"/><rect x="8" y="7" width="1" height="1" fill="#ff0000"/><rect x="1" y="8" width="1" height="1" fill="#ff0000"/><rect x="2" y="8" width="1" height="1" fill="#ff0000"/><rect x="7" y="8" width="1" height="1" fill="#ff0000"/><rect x="8" y="8" width="1" height="1" fill="#ff0000"/><rect x="3" y="9" width="1" height="1" fill="#ff0000"/><rect x="4" y="9" width="1" height="1" fill="#ff0000"/><rect x="5" y="9" width="1" height="1" fill="#ff0000"/><rect x="6" y="9" width="1" height="1" fill="#ff0000"/></g></svg>
<div class="t" id="x27" style="left:82px;top:332px;font-size:12px;transform:scaleX(0.9917);-webkit-text-stroke:.18px #000">流動荷重</div>
<svg class="a" style="left:65px;top:350px;" width="8" height="8" viewBox="0 0 8 8"><g shape-rendering="crispEdges"><rect x="2" y="0" width="1" height="1" fill="#000"/><rect x="3" y="0" width="1" height="1" fill="#000"/><rect x="4" y="0" width="1" height="1" fill="#000"/><rect x="5" y="0" width="1" height="1" fill="#000"/><rect x="1" y="1" width="1" height="1" fill="#000"/><rect x="2" y="1" width="1" height="1" fill="#fff"/><rect x="3" y="1" width="1" height="1" fill="#00ff00"/><rect x="4" y="1" width="1" height="1" fill="#00ff00"/><rect x="5" y="1" width="1" height="1" fill="#00ff00"/><rect x="6" y="1" width="1" height="1" fill="#000"/><rect x="0" y="2" width="1" height="1" fill="#000"/><rect x="1" y="2" width="1" height="1" fill="#fff"/><rect x="2" y="2" width="1" height="1" fill="#00ff00"/><rect x="3" y="2" width="1" height="1" fill="#00ff00"/><rect x="4" y="2" width="1" height="1" fill="#00ff00"/><rect x="5" y="2" width="1" height="1" fill="#00ff00"/><rect x="6" y="2" width="1" height="1" fill="#0000ff"/><rect x="7" y="2" width="1" height="1" fill="#000"/><rect x="0" y="3" width="1" height="1" fill="#000"/><rect x="1" y="3" width="1" height="1" fill="#00ff00"/><rect x="2" y="3" width="1" height="1" fill="#00ff00"/><rect x="3" y="3" width="1" height="1" fill="#00ff00"/><rect x="4" y="3" width="1" height="1" fill="#00ff00"/><rect x="5" y="3" width="1" height="1" fill="#00ff00"/><rect x="6" y="3" width="1" height="1" fill="#0000ff"/><rect x="7" y="3" width="1" height="1" fill="#000"/><rect x="0" y="4" width="1" height="1" fill="#000"/><rect x="1" y="4" width="1" height="1" fill="#00ff00"/><rect x="2" y="4" width="1" height="1" fill="#00ff00"/><rect x="3" y="4" width="1" height="1" fill="#00ff00"/><rect x="4" y="4" width="1" height="1" fill="#00ff00"/><rect x="5" y="4" width="1" height="1" fill="#00ff00"/><rect x="6" y="4" width="1" height="1" fill="#0000ff"/><rect x="7" y="4" width="1" height="1" fill="#000"/><rect x="0" y="5" width="1" height="1" fill="#000"/><rect x="1" y="5" width="1" height="1" fill="#00ff00"/><rect x="2" y="5" width="1" height="1" fill="#00ff00"/><rect x="3" y="5" width="1" height="1" fill="#00ff00"/><rect x="4" y="5" width="1" height="1" fill="#00ff00"/><rect x="5" y="5" width="1" height="1" fill="#0000ff"/><rect x="6" y="5" width="1" height="1" fill="#0000ff"/><rect x="7" y="5" width="1" height="1" fill="#000"/><rect x="1" y="6" width="1" height="1" fill="#000"/><rect x="2" y="6" width="1" height="1" fill="#0000ff"/><rect x="3" y="6" width="1" height="1" fill="#0000ff"/><rect x="4" y="6" width="1" height="1" fill="#0000ff"/><rect x="5" y="6" width="1" height="1" fill="#0000ff"/><rect x="6" y="6" width="1" height="1" fill="#000"/><rect x="2" y="7" width="1" height="1" fill="#000"/><rect x="3" y="7" width="1" height="1" fill="#000"/><rect x="4" y="7" width="1" height="1" fill="#000"/><rect x="5" y="7" width="1" height="1" fill="#000"/></g></svg>
<div class="t" id="x28" style="left:82px;top:348px;font-size:12px;transform:scaleX(1.0000);-webkit-text-stroke:.18px #000">杭本体</div>
<svg class="a" style="left:65px;top:366px;" width="8" height="8" viewBox="0 0 8 8"><g shape-rendering="crispEdges"><rect x="2" y="0" width="1" height="1" fill="#000"/><rect x="3" y="0" width="1" height="1" fill="#000"/><rect x="4" y="0" width="1" height="1" fill="#000"/><rect x="5" y="0" width="1" height="1" fill="#000"/><rect x="1" y="1" width="1" height="1" fill="#000"/><rect x="2" y="1" width="1" height="1" fill="#fff"/><rect x="3" y="1" width="1" height="1" fill="#00ff00"/><rect x="4" y="1" width="1" height="1" fill="#00ff00"/><rect x="5" y="1" width="1" height="1" fill="#00ff00"/><rect x="6" y="1" width="1" height="1" fill="#000"/><rect x="0" y="2" width="1" height="1" fill="#000"/><rect x="1" y="2" width="1" height="1" fill="#fff"/><rect x="2" y="2" width="1" height="1" fill="#00ff00"/><rect x="3" y="2" width="1" height="1" fill="#00ff00"/><rect x="4" y="2" width="1" height="1" fill="#00ff00"/><rect x="5" y="2" width="1" height="1" fill="#00ff00"/><rect x="6" y="2" width="1" height="1" fill="#0000ff"/><rect x="7" y="2" width="1" height="1" fill="#000"/><rect x="0" y="3" width="1" height="1" fill="#000"/><rect x="1" y="3" width="1" height="1" fill="#00ff00"/><rect x="2" y="3" width="1" height="1" fill="#00ff00"/><rect x="3" y="3" width="1" height="1" fill="#00ff00"/><rect x="4" y="3" width="1" height="1" fill="#00ff00"/><rect x="5" y="3" width="1" height="1" fill="#00ff00"/><rect x="6" y="3" width="1" height="1" fill="#0000ff"/><rect x="7" y="3" width="1" height="1" fill="#000"/><rect x="0" y="4" width="1" height="1" fill="#000"/><rect x="1" y="4" width="1" height="1" fill="#00ff00"/><rect x="2" y="4" width="1" height="1" fill="#00ff00"/><rect x="3" y="4" width="1" height="1" fill="#00ff00"/><rect x="4" y="4" width="1" height="1" fill="#00ff00"/><rect x="5" y="4" width="1" height="1" fill="#00ff00"/><rect x="6" y="4" width="1" height="1" fill="#0000ff"/><rect x="7" y="4" width="1" height="1" fill="#000"/><rect x="0" y="5" width="1" height="1" fill="#000"/><rect x="1" y="5" width="1" height="1" fill="#00ff00"/><rect x="2" y="5" width="1" height="1" fill="#00ff00"/><rect x="3" y="5" width="1" height="1" fill="#00ff00"/><rect x="4" y="5" width="1" height="1" fill="#00ff00"/><rect x="5" y="5" width="1" height="1" fill="#0000ff"/><rect x="6" y="5" width="1" height="1" fill="#0000ff"/><rect x="7" y="5" width="1" height="1" fill="#000"/><rect x="1" y="6" width="1" height="1" fill="#000"/><rect x="2" y="6" width="1" height="1" fill="#0000ff"/><rect x="3" y="6" width="1" height="1" fill="#0000ff"/><rect x="4" y="6" width="1" height="1" fill="#0000ff"/><rect x="5" y="6" width="1" height="1" fill="#0000ff"/><rect x="6" y="6" width="1" height="1" fill="#000"/><rect x="2" y="7" width="1" height="1" fill="#000"/><rect x="3" y="7" width="1" height="1" fill="#000"/><rect x="4" y="7" width="1" height="1" fill="#000"/><rect x="5" y="7" width="1" height="1" fill="#000"/></g></svg>
<div class="t" id="x29" style="left:82px;top:364px;font-size:12px;transform:scaleX(0.9567);-webkit-text-stroke:.18px #000">地盤データ</div>
<svg class="a" style="left:64px;top:381px;" width="10" height="10" viewBox="0 0 10 10"><g shape-rendering="crispEdges"><rect x="3" y="0" width="1" height="1" fill="#ff0000"/><rect x="4" y="0" width="1" height="1" fill="#ff0000"/><rect x="5" y="0" width="1" height="1" fill="#ff0000"/><rect x="6" y="0" width="1" height="1" fill="#ff0000"/><rect x="1" y="1" width="1" height="1" fill="#ff0000"/><rect x="2" y="1" width="1" height="1" fill="#ff0000"/><rect x="7" y="1" width="1" height="1" fill="#ff0000"/><rect x="8" y="1" width="1" height="1" fill="#ff0000"/><rect x="1" y="2" width="1" height="1" fill="#ff0000"/><rect x="2" y="2" width="1" height="1" fill="#ff0000"/><rect x="8" y="2" width="1" height="1" fill="#ff0000"/><rect x="0" y="3" width="1" height="1" fill="#ff0000"/><rect x="3" y="3" width="1" height="1" fill="#ff0000"/><rect x="9" y="3" width="1" height="1" fill="#ff0000"/><rect x="0" y="4" width="1" height="1" fill="#ff0000"/><rect x="4" y="4" width="1" height="1" fill="#ff0000"/><rect x="9" y="4" width="1" height="1" fill="#ff0000"/><rect x="0" y="5" width="1" height="1" fill="#ff0000"/><rect x="5" y="5" width="1" height="1" fill="#ff0000"/><rect x="9" y="5" width="1" height="1" fill="#ff0000"/><rect x="0" y="6" width="1" height="1" fill="#ff0000"/><rect x="6" y="6" width="1" height="1" fill="#ff0000"/><rect x="9" y="6" width="1" height="1" fill="#ff0000"/><rect x="1" y="7" width="1" height="1" fill="#ff0000"/><rect x="7" y="7" width="1" height="1" fill="#ff0000"/><rect x="8" y="7" width="1" height="1" fill="#ff0000"/><rect x="1" y="8" width="1" height="1" fill="#ff0000"/><rect x="2" y="8" width="1" height="1" fill="#ff0000"/><rect x="7" y="8" width="1" height="1" fill="#ff0000"/><rect x="8" y="8" width="1" height="1" fill="#ff0000"/><rect x="3" y="9" width="1" height="1" fill="#ff0000"/><rect x="4" y="9" width="1" height="1" fill="#ff0000"/><rect x="5" y="9" width="1" height="1" fill="#ff0000"/><rect x="6" y="9" width="1" height="1" fill="#ff0000"/></g></svg>
<div class="t" id="x30" style="left:82px;top:380px;font-size:12px;transform:scaleX(0.9492);-webkit-text-stroke:.18px #000">フーチング前面水平抵抗</div>
<div class="t" id="x31" style="left:63px;top:396px;font-size:12px;transform:scaleX(0.9214);-webkit-text-stroke:.18px #000">計算・結果確認</div>
<svg class="a" style="left:65px;top:414px;" width="8" height="8" viewBox="0 0 8 8"><g shape-rendering="crispEdges"><rect x="2" y="0" width="1" height="1" fill="#000"/><rect x="3" y="0" width="1" height="1" fill="#000"/><rect x="4" y="0" width="1" height="1" fill="#000"/><rect x="5" y="0" width="1" height="1" fill="#000"/><rect x="1" y="1" width="1" height="1" fill="#000"/><rect x="2" y="1" width="1" height="1" fill="#fff"/><rect x="3" y="1" width="1" height="1" fill="#ff00ff"/><rect x="4" y="1" width="1" height="1" fill="#ff00ff"/><rect x="5" y="1" width="1" height="1" fill="#ff00ff"/><rect x="6" y="1" width="1" height="1" fill="#000"/><rect x="0" y="2" width="1" height="1" fill="#000"/><rect x="1" y="2" width="1" height="1" fill="#fff"/><rect x="2" y="2" width="1" height="1" fill="#ff00ff"/><rect x="3" y="2" width="1" height="1" fill="#ff00ff"/><rect x="4" y="2" width="1" height="1" fill="#ff00ff"/><rect x="5" y="2" width="1" height="1" fill="#ff00ff"/><rect x="6" y="2" width="1" height="1" fill="#2000c0"/><rect x="7" y="2" width="1" height="1" fill="#000"/><rect x="0" y="3" width="1" height="1" fill="#000"/><rect x="1" y="3" width="1" height="1" fill="#ff00ff"/><rect x="2" y="3" width="1" height="1" fill="#ff00ff"/><rect x="3" y="3" width="1" height="1" fill="#ff00ff"/><rect x="4" y="3" width="1" height="1" fill="#ff00ff"/><rect x="5" y="3" width="1" height="1" fill="#ff00ff"/><rect x="6" y="3" width="1" height="1" fill="#2000c0"/><rect x="7" y="3" width="1" height="1" fill="#000"/><rect x="0" y="4" width="1" height="1" fill="#000"/><rect x="1" y="4" width="1" height="1" fill="#ff00ff"/><rect x="2" y="4" width="1" height="1" fill="#ff00ff"/><rect x="3" y="4" width="1" height="1" fill="#ff00ff"/><rect x="4" y="4" width="1" height="1" fill="#ff00ff"/><rect x="5" y="4" width="1" height="1" fill="#ff00ff"/><rect x="6" y="4" width="1" height="1" fill="#2000c0"/><rect x="7" y="4" width="1" height="1" fill="#000"/><rect x="0" y="5" width="1" height="1" fill="#000"/><rect x="1" y="5" width="1" height="1" fill="#ff00ff"/><rect x="2" y="5" width="1" height="1" fill="#ff00ff"/><rect x="3" y="5" width="1" height="1" fill="#ff00ff"/><rect x="4" y="5" width="1" height="1" fill="#ff00ff"/><rect x="5" y="5" width="1" height="1" fill="#2000c0"/><rect x="6" y="5" width="1" height="1" fill="#2000c0"/><rect x="7" y="5" width="1" height="1" fill="#000"/><rect x="1" y="6" width="1" height="1" fill="#000"/><rect x="2" y="6" width="1" height="1" fill="#2000c0"/><rect x="3" y="6" width="1" height="1" fill="#2000c0"/><rect x="4" y="6" width="1" height="1" fill="#2000c0"/><rect x="5" y="6" width="1" height="1" fill="#2000c0"/><rect x="6" y="6" width="1" height="1" fill="#000"/><rect x="2" y="7" width="1" height="1" fill="#000"/><rect x="3" y="7" width="1" height="1" fill="#000"/><rect x="4" y="7" width="1" height="1" fill="#000"/><rect x="5" y="7" width="1" height="1" fill="#000"/></g></svg>
<div class="t" id="x32" style="left:82px;top:412px;font-size:12px;transform:scaleX(0.9708);-webkit-text-stroke:.18px #000">結果総括</div>
<svg class="a" style="left:65px;top:430px;" width="8" height="8" viewBox="0 0 8 8"><g shape-rendering="crispEdges"><rect x="2" y="0" width="1" height="1" fill="#000"/><rect x="3" y="0" width="1" height="1" fill="#000"/><rect x="4" y="0" width="1" height="1" fill="#000"/><rect x="5" y="0" width="1" height="1" fill="#000"/><rect x="1" y="1" width="1" height="1" fill="#000"/><rect x="2" y="1" width="1" height="1" fill="#fff"/><rect x="3" y="1" width="1" height="1" fill="#ff00ff"/><rect x="4" y="1" width="1" height="1" fill="#ff00ff"/><rect x="5" y="1" width="1" height="1" fill="#ff00ff"/><rect x="6" y="1" width="1" height="1" fill="#000"/><rect x="0" y="2" width="1" height="1" fill="#000"/><rect x="1" y="2" width="1" height="1" fill="#fff"/><rect x="2" y="2" width="1" height="1" fill="#ff00ff"/><rect x="3" y="2" width="1" height="1" fill="#ff00ff"/><rect x="4" y="2" width="1" height="1" fill="#ff00ff"/><rect x="5" y="2" width="1" height="1" fill="#ff00ff"/><rect x="6" y="2" width="1" height="1" fill="#2000c0"/><rect x="7" y="2" width="1" height="1" fill="#000"/><rect x="0" y="3" width="1" height="1" fill="#000"/><rect x="1" y="3" width="1" height="1" fill="#ff00ff"/><rect x="2" y="3" width="1" height="1" fill="#ff00ff"/><rect x="3" y="3" width="1" height="1" fill="#ff00ff"/><rect x="4" y="3" width="1" height="1" fill="#ff00ff"/><rect x="5" y="3" width="1" height="1" fill="#ff00ff"/><rect x="6" y="3" width="1" height="1" fill="#2000c0"/><rect x="7" y="3" width="1" height="1" fill="#000"/><rect x="0" y="4" width="1" height="1" fill="#000"/><rect x="1" y="4" width="1" height="1" fill="#ff00ff"/><rect x="2" y="4" width="1" height="1" fill="#ff00ff"/><rect x="3" y="4" width="1" height="1" fill="#ff00ff"/><rect x="4" y="4" width="1" height="1" fill="#ff00ff"/><rect x="5" y="4" width="1" height="1" fill="#ff00ff"/><rect x="6" y="4" width="1" height="1" fill="#2000c0"/><rect x="7" y="4" width="1" height="1" fill="#000"/><rect x="0" y="5" width="1" height="1" fill="#000"/><rect x="1" y="5" width="1" height="1" fill="#ff00ff"/><rect x="2" y="5" width="1" height="1" fill="#ff00ff"/><rect x="3" y="5" width="1" height="1" fill="#ff00ff"/><rect x="4" y="5" width="1" height="1" fill="#ff00ff"/><rect x="5" y="5" width="1" height="1" fill="#2000c0"/><rect x="6" y="5" width="1" height="1" fill="#2000c0"/><rect x="7" y="5" width="1" height="1" fill="#000"/><rect x="1" y="6" width="1" height="1" fill="#000"/><rect x="2" y="6" width="1" height="1" fill="#2000c0"/><rect x="3" y="6" width="1" height="1" fill="#2000c0"/><rect x="4" y="6" width="1" height="1" fill="#2000c0"/><rect x="5" y="6" width="1" height="1" fill="#2000c0"/><rect x="6" y="6" width="1" height="1" fill="#000"/><rect x="2" y="7" width="1" height="1" fill="#000"/><rect x="3" y="7" width="1" height="1" fill="#000"/><rect x="4" y="7" width="1" height="1" fill="#000"/><rect x="5" y="7" width="1" height="1" fill="#000"/></g></svg>
<div class="t" id="x33" style="left:82px;top:428px;font-size:12px;transform:scaleX(1.0225);-webkit-text-stroke:.18px #000">安定計算 (永続/変動作用)</div>
<svg class="a" style="left:64px;top:445px;" width="10" height="10" viewBox="0 0 10 10"><g shape-rendering="crispEdges"><rect x="3" y="0" width="1" height="1" fill="#ff0000"/><rect x="4" y="0" width="1" height="1" fill="#ff0000"/><rect x="5" y="0" width="1" height="1" fill="#ff0000"/><rect x="6" y="0" width="1" height="1" fill="#ff0000"/><rect x="1" y="1" width="1" height="1" fill="#ff0000"/><rect x="2" y="1" width="1" height="1" fill="#ff0000"/><rect x="7" y="1" width="1" height="1" fill="#ff0000"/><rect x="8" y="1" width="1" height="1" fill="#ff0000"/><rect x="1" y="2" width="1" height="1" fill="#ff0000"/><rect x="2" y="2" width="1" height="1" fill="#ff0000"/><rect x="8" y="2" width="1" height="1" fill="#ff0000"/><rect x="0" y="3" width="1" height="1" fill="#ff0000"/><rect x="3" y="3" width="1" height="1" fill="#ff0000"/><rect x="9" y="3" width="1" height="1" fill="#ff0000"/><rect x="0" y="4" width="1" height="1" fill="#ff0000"/><rect x="4" y="4" width="1" height="1" fill="#ff0000"/><rect x="9" y="4" width="1" height="1" fill="#ff0000"/><rect x="0" y="5" width="1" height="1" fill="#ff0000"/><rect x="5" y="5" width="1" height="1" fill="#ff0000"/><rect x="9" y="5" width="1" height="1" fill="#ff0000"/><rect x="0" y="6" width="1" height="1" fill="#ff0000"/><rect x="6" y="6" width="1" height="1" fill="#ff0000"/><rect x="9" y="6" width="1" height="1" fill="#ff0000"/><rect x="1" y="7" width="1" height="1" fill="#ff0000"/><rect x="7" y="7" width="1" height="1" fill="#ff0000"/><rect x="8" y="7" width="1" height="1" fill="#ff0000"/><rect x="1" y="8" width="1" height="1" fill="#ff0000"/><rect x="2" y="8" width="1" height="1" fill="#ff0000"/><rect x="7" y="8" width="1" height="1" fill="#ff0000"/><rect x="8" y="8" width="1" height="1" fill="#ff0000"/><rect x="3" y="9" width="1" height="1" fill="#ff0000"/><rect x="4" y="9" width="1" height="1" fill="#ff0000"/><rect x="5" y="9" width="1" height="1" fill="#ff0000"/><rect x="6" y="9" width="1" height="1" fill="#ff0000"/></g></svg>
<div class="t" id="x34" style="left:82px;top:444px;font-size:12px;transform:scaleX(1.0210);-webkit-text-stroke:.18px #000">杭体 (永続/変動作用)</div>
<svg class="a" style="left:64px;top:461px;" width="10" height="10" viewBox="0 0 10 10"><g shape-rendering="crispEdges"><rect x="3" y="0" width="1" height="1" fill="#ff0000"/><rect x="4" y="0" width="1" height="1" fill="#ff0000"/><rect x="5" y="0" width="1" height="1" fill="#ff0000"/><rect x="6" y="0" width="1" height="1" fill="#ff0000"/><rect x="1" y="1" width="1" height="1" fill="#ff0000"/><rect x="2" y="1" width="1" height="1" fill="#ff0000"/><rect x="7" y="1" width="1" height="1" fill="#ff0000"/><rect x="8" y="1" width="1" height="1" fill="#ff0000"/><rect x="1" y="2" width="1" height="1" fill="#ff0000"/><rect x="2" y="2" width="1" height="1" fill="#ff0000"/><rect x="8" y="2" width="1" height="1" fill="#ff0000"/><rect x="0" y="3" width="1" height="1" fill="#ff0000"/><rect x="3" y="3" width="1" height="1" fill="#ff0000"/><rect x="9" y="3" width="1" height="1" fill="#ff0000"/><rect x="0" y="4" width="1" height="1" fill="#ff0000"/><rect x="4" y="4" width="1" height="1" fill="#ff0000"/><rect x="9" y="4" width="1" height="1" fill="#ff0000"/><rect x="0" y="5" width="1" height="1" fill="#ff0000"/><rect x="5" y="5" width="1" height="1" fill="#ff0000"/><rect x="9" y="5" width="1" height="1" fill="#ff0000"/><rect x="0" y="6" width="1" height="1" fill="#ff0000"/><rect x="6" y="6" width="1" height="1" fill="#ff0000"/><rect x="9" y="6" width="1" height="1" fill="#ff0000"/><rect x="1" y="7" width="1" height="1" fill="#ff0000"/><rect x="7" y="7" width="1" height="1" fill="#ff0000"/><rect x="8" y="7" width="1" height="1" fill="#ff0000"/><rect x="1" y="8" width="1" height="1" fill="#ff0000"/><rect x="2" y="8" width="1" height="1" fill="#ff0000"/><rect x="7" y="8" width="1" height="1" fill="#ff0000"/><rect x="8" y="8" width="1" height="1" fill="#ff0000"/><rect x="3" y="9" width="1" height="1" fill="#ff0000"/><rect x="4" y="9" width="1" height="1" fill="#ff0000"/><rect x="5" y="9" width="1" height="1" fill="#ff0000"/><rect x="6" y="9" width="1" height="1" fill="#ff0000"/></g></svg>
<div class="t" id="x35" style="left:82px;top:460px;font-size:12px;transform:scaleX(1.0159);-webkit-text-stroke:.18px #000">杭頭接合部 (永続/変動作用)</div>
<svg class="a" style="left:64px;top:477px;" width="10" height="10" viewBox="0 0 10 10"><g shape-rendering="crispEdges"><rect x="3" y="0" width="1" height="1" fill="#ff0000"/><rect x="4" y="0" width="1" height="1" fill="#ff0000"/><rect x="5" y="0" width="1" height="1" fill="#ff0000"/><rect x="6" y="0" width="1" height="1" fill="#ff0000"/><rect x="1" y="1" width="1" height="1" fill="#ff0000"/><rect x="2" y="1" width="1" height="1" fill="#ff0000"/><rect x="7" y="1" width="1" height="1" fill="#ff0000"/><rect x="8" y="1" width="1" height="1" fill="#ff0000"/><rect x="1" y="2" width="1" height="1" fill="#ff0000"/><rect x="2" y="2" width="1" height="1" fill="#ff0000"/><rect x="8" y="2" width="1" height="1" fill="#ff0000"/><rect x="0" y="3" width="1" height="1" fill="#ff0000"/><rect x="3" y="3" width="1" height="1" fill="#ff0000"/><rect x="9" y="3" width="1" height="1" fill="#ff0000"/><rect x="0" y="4" width="1" height="1" fill="#ff0000"/><rect x="4" y="4" width="1" height="1" fill="#ff0000"/><rect x="9" y="4" width="1" height="1" fill="#ff0000"/><rect x="0" y="5" width="1" height="1" fill="#ff0000"/><rect x="5" y="5" width="1" height="1" fill="#ff0000"/><rect x="9" y="5" width="1" height="1" fill="#ff0000"/><rect x="0" y="6" width="1" height="1" fill="#ff0000"/><rect x="6" y="6" width="1" height="1" fill="#ff0000"/><rect x="9" y="6" width="1" height="1" fill="#ff0000"/><rect x="1" y="7" width="1" height="1" fill="#ff0000"/><rect x="7" y="7" width="1" height="1" fill="#ff0000"/><rect x="8" y="7" width="1" height="1" fill="#ff0000"/><rect x="1" y="8" width="1" height="1" fill="#ff0000"/><rect x="2" y="8" width="1" height="1" fill="#ff0000"/><rect x="7" y="8" width="1" height="1" fill="#ff0000"/><rect x="8" y="8" width="1" height="1" fill="#ff0000"/><rect x="3" y="9" width="1" height="1" fill="#ff0000"/><rect x="4" y="9" width="1" height="1" fill="#ff0000"/><rect x="5" y="9" width="1" height="1" fill="#ff0000"/><rect x="6" y="9" width="1" height="1" fill="#ff0000"/></g></svg>
<div class="t" id="x36" style="left:82px;top:476px;font-size:12px;transform:scaleX(0.9818);-webkit-text-stroke:.18px #000">フーチング (永続/変動作用)</div>
<svg class="a" style="left:65px;top:494px;" width="8" height="8" viewBox="0 0 8 8"><g shape-rendering="crispEdges"><rect x="2" y="0" width="1" height="1" fill="#000"/><rect x="3" y="0" width="1" height="1" fill="#000"/><rect x="4" y="0" width="1" height="1" fill="#000"/><rect x="5" y="0" width="1" height="1" fill="#000"/><rect x="1" y="1" width="1" height="1" fill="#000"/><rect x="2" y="1" width="1" height="1" fill="#fff"/><rect x="3" y="1" width="1" height="1" fill="#ff00ff"/><rect x="4" y="1" width="1" height="1" fill="#ff00ff"/><rect x="5" y="1" width="1" height="1" fill="#ff00ff"/><rect x="6" y="1" width="1" height="1" fill="#000"/><rect x="0" y="2" width="1" height="1" fill="#000"/><rect x="1" y="2" width="1" height="1" fill="#fff"/><rect x="2" y="2" width="1" height="1" fill="#ff00ff"/><rect x="3" y="2" width="1" height="1" fill="#ff00ff"/><rect x="4" y="2" width="1" height="1" fill="#ff00ff"/><rect x="5" y="2" width="1" height="1" fill="#ff00ff"/><rect x="6" y="2" width="1" height="1" fill="#2000c0"/><rect x="7" y="2" width="1" height="1" fill="#000"/><rect x="0" y="3" width="1" height="1" fill="#000"/><rect x="1" y="3" width="1" height="1" fill="#ff00ff"/><rect x="2" y="3" width="1" height="1" fill="#ff00ff"/><rect x="3" y="3" width="1" height="1" fill="#ff00ff"/><rect x="4" y="3" width="1" height="1" fill="#ff00ff"/><rect x="5" y="3" width="1" height="1" fill="#ff00ff"/><rect x="6" y="3" width="1" height="1" fill="#2000c0"/><rect x="7" y="3" width="1" height="1" fill="#000"/><rect x="0" y="4" width="1" height="1" fill="#000"/><rect x="1" y="4" width="1" height="1" fill="#ff00ff"/><rect x="2" y="4" width="1" height="1" fill="#ff00ff"/><rect x="3" y="4" width="1" height="1" fill="#ff00ff"/><rect x="4" y="4" width="1" height="1" fill="#ff00ff"/><rect x="5" y="4" width="1" height="1" fill="#ff00ff"/><rect x="6" y="4" width="1" height="1" fill="#2000c0"/><rect x="7" y="4" width="1" height="1" fill="#000"/><rect x="0" y="5" width="1" height="1" fill="#000"/><rect x="1" y="5" width="1" height="1" fill="#ff00ff"/><rect x="2" y="5" width="1" height="1" fill="#ff00ff"/><rect x="3" y="5" width="1" height="1" fill="#ff00ff"/><rect x="4" y="5" width="1" height="1" fill="#ff00ff"/><rect x="5" y="5" width="1" height="1" fill="#2000c0"/><rect x="6" y="5" width="1" height="1" fill="#2000c0"/><rect x="7" y="5" width="1" height="1" fill="#000"/><rect x="1" y="6" width="1" height="1" fill="#000"/><rect x="2" y="6" width="1" height="1" fill="#2000c0"/><rect x="3" y="6" width="1" height="1" fill="#2000c0"/><rect x="4" y="6" width="1" height="1" fill="#2000c0"/><rect x="5" y="6" width="1" height="1" fill="#2000c0"/><rect x="6" y="6" width="1" height="1" fill="#000"/><rect x="2" y="7" width="1" height="1" fill="#000"/><rect x="3" y="7" width="1" height="1" fill="#000"/><rect x="4" y="7" width="1" height="1" fill="#000"/><rect x="5" y="7" width="1" height="1" fill="#000"/></g></svg>
<div class="t" id="x37" style="left:82px;top:492px;font-size:12px;transform:scaleX(1.0156);-webkit-text-stroke:.18px #000">安定計算 (偶発作用)</div>
<svg class="a" style="left:64px;top:509px;" width="10" height="10" viewBox="0 0 10 10"><g shape-rendering="crispEdges"><rect x="3" y="0" width="1" height="1" fill="#ff0000"/><rect x="4" y="0" width="1" height="1" fill="#ff0000"/><rect x="5" y="0" width="1" height="1" fill="#ff0000"/><rect x="6" y="0" width="1" height="1" fill="#ff0000"/><rect x="1" y="1" width="1" height="1" fill="#ff0000"/><rect x="2" y="1" width="1" height="1" fill="#ff0000"/><rect x="7" y="1" width="1" height="1" fill="#ff0000"/><rect x="8" y="1" width="1" height="1" fill="#ff0000"/><rect x="1" y="2" width="1" height="1" fill="#ff0000"/><rect x="2" y="2" width="1" height="1" fill="#ff0000"/><rect x="8" y="2" width="1" height="1" fill="#ff0000"/><rect x="0" y="3" width="1" height="1" fill="#ff0000"/><rect x="3" y="3" width="1" height="1" fill="#ff0000"/><rect x="9" y="3" width="1" height="1" fill="#ff0000"/><rect x="0" y="4" width="1" height="1" fill="#ff0000"/><rect x="4" y="4" width="1" height="1" fill="#ff0000"/><rect x="9" y="4" width="1" height="1" fill="#ff0000"/><rect x="0" y="5" width="1" height="1" fill="#ff0000"/><rect x="5" y="5" width="1" height="1" fill="#ff0000"/><rect x="9" y="5" width="1" height="1" fill="#ff0000"/><rect x="0" y="6" width="1" height="1" fill="#ff0000"/><rect x="6" y="6" width="1" height="1" fill="#ff0000"/><rect x="9" y="6" width="1" height="1" fill="#ff0000"/><rect x="1" y="7" width="1" height="1" fill="#ff0000"/><rect x="7" y="7" width="1" height="1" fill="#ff0000"/><rect x="8" y="7" width="1" height="1" fill="#ff0000"/><rect x="1" y="8" width="1" height="1" fill="#ff0000"/><rect x="2" y="8" width="1" height="1" fill="#ff0000"/><rect x="7" y="8" width="1" height="1" fill="#ff0000"/><rect x="8" y="8" width="1" height="1" fill="#ff0000"/><rect x="3" y="9" width="1" height="1" fill="#ff0000"/><rect x="4" y="9" width="1" height="1" fill="#ff0000"/><rect x="5" y="9" width="1" height="1" fill="#ff0000"/><rect x="6" y="9" width="1" height="1" fill="#ff0000"/></g></svg>
<div class="t" id="x38" style="left:82px;top:508px;font-size:12px;transform:scaleX(0.9470);-webkit-text-stroke:.18px #000">フーチング (偶発作用)</div>
<svg class="a" style="left:65px;top:526px;" width="8" height="8" viewBox="0 0 8 8"><g shape-rendering="crispEdges"><rect x="2" y="0" width="1" height="1" fill="#000"/><rect x="3" y="0" width="1" height="1" fill="#000"/><rect x="4" y="0" width="1" height="1" fill="#000"/><rect x="5" y="0" width="1" height="1" fill="#000"/><rect x="1" y="1" width="1" height="1" fill="#000"/><rect x="2" y="1" width="1" height="1" fill="#fff"/><rect x="3" y="1" width="1" height="1" fill="#ff00ff"/><rect x="4" y="1" width="1" height="1" fill="#ff00ff"/><rect x="5" y="1" width="1" height="1" fill="#ff00ff"/><rect x="6" y="1" width="1" height="1" fill="#000"/><rect x="0" y="2" width="1" height="1" fill="#000"/><rect x="1" y="2" width="1" height="1" fill="#fff"/><rect x="2" y="2" width="1" height="1" fill="#ff00ff"/><rect x="3" y="2" width="1" height="1" fill="#ff00ff"/><rect x="4" y="2" width="1" height="1" fill="#ff00ff"/><rect x="5" y="2" width="1" height="1" fill="#ff00ff"/><rect x="6" y="2" width="1" height="1" fill="#2000c0"/><rect x="7" y="2" width="1" height="1" fill="#000"/><rect x="0" y="3" width="1" height="1" fill="#000"/><rect x="1" y="3" width="1" height="1" fill="#ff00ff"/><rect x="2" y="3" width="1" height="1" fill="#ff00ff"/><rect x="3" y="3" width="1" height="1" fill="#ff00ff"/><rect x="4" y="3" width="1" height="1" fill="#ff00ff"/><rect x="5" y="3" width="1" height="1" fill="#ff00ff"/><rect x="6" y="3" width="1" height="1" fill="#2000c0"/><rect x="7" y="3" width="1" height="1" fill="#000"/><rect x="0" y="4" width="1" height="1" fill="#000"/><rect x="1" y="4" width="1" height="1" fill="#ff00ff"/><rect x="2" y="4" width="1" height="1" fill="#ff00ff"/><rect x="3" y="4" width="1" height="1" fill="#ff00ff"/><rect x="4" y="4" width="1" height="1" fill="#ff00ff"/><rect x="5" y="4" width="1" height="1" fill="#ff00ff"/><rect x="6" y="4" width="1" height="1" fill="#2000c0"/><rect x="7" y="4" width="1" height="1" fill="#000"/><rect x="0" y="5" width="1" height="1" fill="#000"/><rect x="1" y="5" width="1" height="1" fill="#ff00ff"/><rect x="2" y="5" width="1" height="1" fill="#ff00ff"/><rect x="3" y="5" width="1" height="1" fill="#ff00ff"/><rect x="4" y="5" width="1" height="1" fill="#ff00ff"/><rect x="5" y="5" width="1" height="1" fill="#2000c0"/><rect x="6" y="5" width="1" height="1" fill="#2000c0"/><rect x="7" y="5" width="1" height="1" fill="#000"/><rect x="1" y="6" width="1" height="1" fill="#000"/><rect x="2" y="6" width="1" height="1" fill="#2000c0"/><rect x="3" y="6" width="1" height="1" fill="#2000c0"/><rect x="4" y="6" width="1" height="1" fill="#2000c0"/><rect x="5" y="6" width="1" height="1" fill="#2000c0"/><rect x="6" y="6" width="1" height="1" fill="#000"/><rect x="2" y="7" width="1" height="1" fill="#000"/><rect x="3" y="7" width="1" height="1" fill="#000"/><rect x="4" y="7" width="1" height="1" fill="#000"/><rect x="5" y="7" width="1" height="1" fill="#000"/></g></svg>
<div class="t" id="x39" style="left:82px;top:524px;font-size:12px;transform:scaleX(0.9708);-webkit-text-stroke:.18px #000">基礎ばね</div>
<svg class="a" style="left:27px;top:542px;" width="8" height="8" viewBox="0 0 8 8"><g shape-rendering="crispEdges"><rect x="2" y="0" width="1" height="1" fill="#000"/><rect x="3" y="0" width="1" height="1" fill="#000"/><rect x="4" y="0" width="1" height="1" fill="#000"/><rect x="5" y="0" width="1" height="1" fill="#000"/><rect x="1" y="1" width="1" height="1" fill="#000"/><rect x="2" y="1" width="1" height="1" fill="#fff"/><rect x="3" y="1" width="1" height="1" fill="#00ff00"/><rect x="4" y="1" width="1" height="1" fill="#00ff00"/><rect x="5" y="1" width="1" height="1" fill="#00ff00"/><rect x="6" y="1" width="1" height="1" fill="#000"/><rect x="0" y="2" width="1" height="1" fill="#000"/><rect x="1" y="2" width="1" height="1" fill="#fff"/><rect x="2" y="2" width="1" height="1" fill="#00ff00"/><rect x="3" y="2" width="1" height="1" fill="#00ff00"/><rect x="4" y="2" width="1" height="1" fill="#00ff00"/><rect x="5" y="2" width="1" height="1" fill="#00ff00"/><rect x="6" y="2" width="1" height="1" fill="#0000ff"/><rect x="7" y="2" width="1" height="1" fill="#000"/><rect x="0" y="3" width="1" height="1" fill="#000"/><rect x="1" y="3" width="1" height="1" fill="#00ff00"/><rect x="2" y="3" width="1" height="1" fill="#00ff00"/><rect x="3" y="3" width="1" height="1" fill="#00ff00"/><rect x="4" y="3" width="1" height="1" fill="#00ff00"/><rect x="5" y="3" width="1" height="1" fill="#00ff00"/><rect x="6" y="3" width="1" height="1" fill="#0000ff"/><rect x="7" y="3" width="1" height="1" fill="#000"/><rect x="0" y="4" width="1" height="1" fill="#000"/><rect x="1" y="4" width="1" height="1" fill="#00ff00"/><rect x="2" y="4" width="1" height="1" fill="#00ff00"/><rect x="3" y="4" width="1" height="1" fill="#00ff00"/><rect x="4" y="4" width="1" height="1" fill="#00ff00"/><rect x="5" y="4" width="1" height="1" fill="#00ff00"/><rect x="6" y="4" width="1" height="1" fill="#0000ff"/><rect x="7" y="4" width="1" height="1" fill="#000"/><rect x="0" y="5" width="1" height="1" fill="#000"/><rect x="1" y="5" width="1" height="1" fill="#00ff00"/><rect x="2" y="5" width="1" height="1" fill="#00ff00"/><rect x="3" y="5" width="1" height="1" fill="#00ff00"/><rect x="4" y="5" width="1" height="1" fill="#00ff00"/><rect x="5" y="5" width="1" height="1" fill="#0000ff"/><rect x="6" y="5" width="1" height="1" fill="#0000ff"/><rect x="7" y="5" width="1" height="1" fill="#000"/><rect x="1" y="6" width="1" height="1" fill="#000"/><rect x="2" y="6" width="1" height="1" fill="#0000ff"/><rect x="3" y="6" width="1" height="1" fill="#0000ff"/><rect x="4" y="6" width="1" height="1" fill="#0000ff"/><rect x="5" y="6" width="1" height="1" fill="#0000ff"/><rect x="6" y="6" width="1" height="1" fill="#000"/><rect x="2" y="7" width="1" height="1" fill="#000"/><rect x="3" y="7" width="1" height="1" fill="#000"/><rect x="4" y="7" width="1" height="1" fill="#000"/><rect x="5" y="7" width="1" height="1" fill="#000"/></g></svg>
<div class="t" id="x40" style="left:44px;top:540px;font-size:12px;transform:scaleX(1.0000);-webkit-text-stroke:.18px #000">基準値</div>
<svg class="a" style="left:2px;top:88px" width="257" height="650" viewBox="3 89 257 650"><path d="M13 99.5H24" stroke="#808080" stroke-dasharray="1 1"/><path d="M13 115.5H24" stroke="#808080" stroke-dasharray="1 1"/><path d="M13 131.5H24" stroke="#808080" stroke-dasharray="1 1"/><path d="M32 147.5H43" stroke="#808080" stroke-dasharray="1 1"/><path d="M32 163.5H43" stroke="#808080" stroke-dasharray="1 1"/><path d="M32 179.5H43" stroke="#808080" stroke-dasharray="1 1"/><path d="M32 195.5H43" stroke="#808080" stroke-dasharray="1 1"/><path d="M32 211.5H43" stroke="#808080" stroke-dasharray="1 1"/><path d="M32 227.5H43" stroke="#808080" stroke-dasharray="1 1"/><path d="M32 243.5H43" stroke="#808080" stroke-dasharray="1 1"/><path d="M32 259.5H43" stroke="#808080" stroke-dasharray="1 1"/><path d="M32 275.5H43" stroke="#808080" stroke-dasharray="1 1"/><path d="M32 291.5H43" stroke="#808080" stroke-dasharray="1 1"/><path d="M32 307.5H59" stroke="#808080" stroke-dasharray="1 1"/><path d="M51 323.5H62" stroke="#808080" stroke-dasharray="1 1"/><path d="M51 339.5H62" stroke="#808080" stroke-dasharray="1 1"/><path d="M51 355.5H62" stroke="#808080" stroke-dasharray="1 1"/><path d="M51 371.5H62" stroke="#808080" stroke-dasharray="1 1"/><path d="M51 387.5H62" stroke="#808080" stroke-dasharray="1 1"/><path d="M32 403.5H59" stroke="#808080" stroke-dasharray="1 1"/><path d="M51 419.5H62" stroke="#808080" stroke-dasharray="1 1"/><path d="M51 435.5H62" stroke="#808080" stroke-dasharray="1 1"/><path d="M51 451.5H62" stroke="#808080" stroke-dasharray="1 1"/><path d="M51 467.5H62" stroke="#808080" stroke-dasharray="1 1"/><path d="M51 483.5H62" stroke="#808080" stroke-dasharray="1 1"/><path d="M51 499.5H62" stroke="#808080" stroke-dasharray="1 1"/><path d="M51 515.5H62" stroke="#808080" stroke-dasharray="1 1"/><path d="M51 531.5H62" stroke="#808080" stroke-dasharray="1 1"/><path d="M13 547.5H24" stroke="#808080" stroke-dasharray="1 1"/><path d="M13.5 99V547" stroke="#808080" stroke-dasharray="1 1"/><path d="M32.5 138V404" stroke="#808080" stroke-dasharray="1 1"/><path d="M51.5 312V388" stroke="#808080" stroke-dasharray="1 1"/><path d="M51.5 408V532" stroke="#808080" stroke-dasharray="1 1"/></svg>
<svg class="a" style="left:8px;top:126px;" width="9" height="9" viewBox="0 0 9 9"><rect x="0.5" y="0.5" width="8" height="8" fill="#fff" stroke="#808080"/><path d="M2 4.5H7" stroke="#000"/></svg>
<svg class="a" style="left:27px;top:302px;" width="9" height="9" viewBox="0 0 9 9"><rect x="0.5" y="0.5" width="8" height="8" fill="#fff" stroke="#808080"/><path d="M2 4.5H7" stroke="#000"/></svg>
<svg class="a" style="left:27px;top:398px;" width="9" height="9" viewBox="0 0 9 9"><rect x="0.5" y="0.5" width="8" height="8" fill="#fff" stroke="#808080"/><path d="M2 4.5H7" stroke="#000"/></svg>
<div class="a" style="left:80px;top:743px;width:100px;height:24px;background:#f0f0f0;border-top:1px solid #fff;border-left:1px solid #fff;border-right:1px solid #696969;border-bottom:1px solid #696969"></div>
<div class="a" style="left:81px;top:744px;width:98px;height:22px;border-right:1px solid #a0a0a0;border-bottom:1px solid #a0a0a0"></div>
<svg class="a" style="left:104px;top:748px;" width="17" height="14" viewBox="0 0 17 14"><defs><linearGradient id="bg1" x1="0" y1="0" x2="0" y2="1"><stop offset="0" stop-color="#9ad0ff"/><stop offset="1" stop-color="#2a7ae0"/></linearGradient></defs><path d="M3 .5H14Q16.5 .5 16.5 3V8Q16.5 10.5 14 10.5H7L4 13.5V10.5H3Q.5 10.5 .5 8V3Q.5 .5 3 .5Z" fill="url(#bg1)" stroke="#3a70c0"/><path d="M5 5.5h1.5M8 5.5h1.5M11 5.5h1.5" stroke="#fff" stroke-width="1.5"/></svg>
<div class="t" id="x41" style="left:126px;top:749px;font-size:12px;transform:scaleX(0.8607);font-family:'Liberation Mono',monospace">F8-AI</div>
<div class="a" style="left:262px;top:78px;width:938px;height:21px;background:#f0f0f0"></div>
<div class="a" style="left:262px;top:98px;width:938px;height:1px;background:#a0a0a0"></div>
<div class="a" style="left:1198px;top:78px;width:1px;height:21px;background:#a0a0a0"></div>
<div class="a" style="left:262px;top:78px;width:45px;height:20px;background:#3f7ab5"></div>
<div class="t" id="x42" style="left:276px;top:82px;font-size:12px;color:#ffff00"><b>R7</b></div>
<div class="t" id="x43" style="left:315px;top:82px;font-size:12px;transform:scaleX(0.8180);">タイトル:</div>
<div class="a" style="left:729px;top:78px;width:1px;height:20px;background:#a0a0a0"></div>
<div class="a" style="left:730px;top:78px;width:1px;height:20px;background:#fff"></div>
<div class="t" id="x44" style="left:739px;top:82px;font-size:12px;transform:scaleX(0.7985);">コメント:</div>
<div class="a" style="left:262px;top:99px;width:384px;height:281px;background:#fff"></div>
<div class="a" style="left:650px;top:99px;width:550px;height:281px;background:#fff"></div>
<div class="a" style="left:262px;top:383px;width:384px;height:391px;background:#fff"></div>
<div class="a" style="left:650px;top:383px;width:550px;height:391px;background:#fff"></div>
<div class="a" style="left:646px;top:99px;width:2px;height:675px;background:#f8f8f8"></div>
<div class="a" style="left:648px;top:99px;width:2px;height:675px;background:#a0a0a0"></div>
<div class="a" style="left:262px;top:380px;width:384px;height:2px;background:#f2f2f2"></div>
<div class="a" style="left:650px;top:380px;width:550px;height:2px;background:#f2f2f2"></div>
<div class="a" style="left:262px;top:382px;width:384px;height:1px;background:#a0a0a0"></div>
<div class="a" style="left:650px;top:382px;width:550px;height:1px;background:#a0a0a0"></div>
<div class="a" style="left:260px;top:78px;width:1px;height:696px;background:#a0a0a0"></div>
<div class="a" style="left:0px;top:774px;width:1200px;height:2px;background:#f0f0f0"></div>
<div class="a" style="left:0px;top:776px;width:1200px;height:14px;background:#f0f0f0"></div>
<div class="a" style="left:0px;top:776px;width:400px;height:1px;background:#a0a0a0"></div>
<div class="a" style="left:400px;top:776px;width:2px;height:14px;background:#fff"></div>
<div class="a" style="left:402px;top:776px;width:798px;height:1px;background:#a0a0a0"></div>
<div class="a" style="left:402px;top:776px;width:1px;height:14px;background:#a0a0a0"></div>
<div class="a" style="left:0px;top:790px;width:1200px;height:1px;background:#fff"></div>
<svg class="a" style="left:1185px;top:776px;" width="14" height="14" viewBox="0 0 14 14"><path d="M13 3L3 13M13 7L7 13M13 11L11 13" stroke="#a0a0a0" stroke-width="1.2"/></svg>
<div class="t" id="x45" style="left:267px;top:105px;font-size:13px;transform:scaleX(1.0256);"><b>平面図</b></div>
<div class="t" id="x46" style="left:654px;top:105px;font-size:13px;transform:scaleX(0.9807);"><b>橋軸直角方向（X方向）</b></div>
<div class="t" id="x47" style="left:654px;top:389px;font-size:13px;transform:scaleX(0.9585);"><b>橋軸方向（Y方向）</b></div>
<svg class="a" style="left:262px;top:99px" width="386" height="283" viewBox="263 100 386 283"><path d="M369.5 120V143M561.5 120V143M369 127.5H561" stroke="#0000ff"/><path d="M376 123L370 127.5L375 131M555 123L560 127.5L555 131" stroke="#0000ff" fill="none"/><path d="M342 147.5H365M342 338.5H365M349.5 148V338" stroke="#0000ff"/><path d="M345.5 154L349.5 148L353.5 154M345.5 332L349.5 338L353.5 332" stroke="#0000ff" fill="none"/><rect x="369.5" y="147.5" width="191" height="191" fill="none" stroke="#000"/><circle cx="396.5" cy="174.5" r="13" fill="#c0c0c0" stroke="#000"/><circle cx="396.5" cy="243" r="13" fill="#c0c0c0" stroke="#000"/><circle cx="396.5" cy="311.5" r="13" fill="#c0c0c0" stroke="#000"/><circle cx="465" cy="174.5" r="13" fill="#c0c0c0" stroke="#000"/><circle cx="465" cy="243" r="13" fill="#c0c0c0" stroke="#000"/><circle cx="465" cy="311.5" r="13" fill="#c0c0c0" stroke="#000"/><circle cx="533.5" cy="174.5" r="13" fill="#c0c0c0" stroke="#000"/><circle cx="533.5" cy="243" r="13" fill="#c0c0c0" stroke="#000"/><circle cx="533.5" cy="311.5" r="13" fill="#c0c0c0" stroke="#000"/><path d="M362 244H572" stroke="#008080" stroke-width="2" stroke-dasharray="9 6 3 6" stroke-dashoffset="1"/><path d="M466 135V326" stroke="#008080" stroke-width="2" stroke-dasharray="9 6 3 6" stroke-dashoffset="20"/><path d="M466 148V135" stroke="#008080" stroke-width="2"/><path d="M461 140L466 135L471 140" stroke="#008080" stroke-width="2" fill="none"/><path d="M568 239.5L574 243.5L568 247.5" stroke="#008080" stroke-width="2" fill="none"/><path d="M474 133.5L479 138.5L484 133.5M479 138.5V143" stroke="#008080" stroke-width="1.6" fill="none"/><path d="M565 226L576 236M576 226L565 236" stroke="#008080" stroke-width="1.6"/></svg>
<div class="t" id="x48" style="left:452px;top:112px;font-size:11px;color:#0000ff;font-family:'Liberation Sans',sans-serif">8500</div>
<div class="t" style="left:335px;top:253px;font-size:11px;color:#0000ff;transform:rotate(-90deg);transform-origin:0 0">8500</div>
<div class="t" id="x49" style="left:409px;top:325px;font-size:13px;transform:scaleX(1.0803);"><b>杭種:場所打ち杭</b></div>
<div class="t" id="x50" style="left:409px;top:341px;font-size:13px;transform:scaleX(1.1297);"><b>杭径:1.20 m</b></div>
<div class="t" id="x51" style="left:409px;top:357px;font-size:13px;transform:scaleX(1.1224);"><b>杭長:19.90 m</b></div>
<svg class="a" style="left:650px;top:99px" width="552" height="283" viewBox="651 100 552 283"><path d="M881.5 126V149M969.5 126V149" stroke="#000"/><rect x="887.5" y="149.5" width="13" height="207" fill="#c0c0c0" stroke="#000"/><rect x="919.5" y="149.5" width="12" height="207" fill="#c0c0c0" stroke="#000"/><rect x="950.5" y="149.5" width="13" height="207" fill="#c0c0c0" stroke="#000"/><path d="M859 149.5H991" stroke="#0000ff"/><path d="M859 258.5H991M859 362.5H991" stroke="#800000"/><path d="M859 341.5H991" stroke="#ff0000"/><rect x="923.5" y="147.5" width="4" height="4" fill="#f00" stroke="#000"/><path d="M915.5 136.5H929.5V132.5L936 138L929.5 143V139.5H915.5Z" fill="#008080" stroke="#000"/></svg>
<svg class="a" style="left:650px;top:384px" width="552" height="391" viewBox="651 385 552 391"><path d="M863.5 421V453M987.5 421V453" stroke="#000"/><rect x="872.5" y="453.5" width="17" height="289" fill="#c0c0c0" stroke="#000"/><rect x="916.5" y="453.5" width="18" height="289" fill="#c0c0c0" stroke="#000"/><rect x="961.5" y="453.5" width="17" height="289" fill="#c0c0c0" stroke="#000"/><path d="M832 453.5H1018" stroke="#0000ff"/><path d="M832 605.5H1018M832 751.5H1018" stroke="#800000"/><path d="M832 722.5H1018" stroke="#ff0000"/><rect x="923.5" y="451.5" width="4" height="4" fill="#f00" stroke="#000"/><path d="M910.5 434.5H929.5V430.5L940.5 437L929.5 443.5V438.5H910.5Z" fill="#008080" stroke="#000"/></svg>
<div class="a" style="left:263px;top:385px;width:47px;height:22px;background:#f0f0f0;border-top:1px solid #fff;border-left:1px solid #fff;border-right:1px solid #000;border-bottom:1px solid #000"></div>
<div class="a" style="left:264px;top:386px;width:45px;height:20px;border-right:1px solid #808080;border-bottom:1px solid #808080"></div>
<div class="a" style="left:267px;top:388px;width:39px;height:15px;border:1px dotted #000"></div>
<div class="t" id="x52" style="left:276px;top:387px;font-size:13px;transform:scaleX(1.1429);"><b>3D</b></div>
<div class="a" style="left:314px;top:383px;width:139px;height:24px;background:#ececec"></div>
<svg class="a" style="left:317px;top:386px;" width="16" height="16" viewBox="0 0 16 16"><path d="M8 .8L15.2 3.5V12.5L8 15.2L.8 12.5V3.5Z" fill="#c8c8c8" stroke="#000" stroke-width="1"/><path d="M.8 3.5L8 6.2L15.2 3.5L8 .8Z" fill="#c8c8c8" stroke="#000" stroke-width=".8"/><path d="M.8 3.5L8 6.2V15.2L.8 12.5Z" fill="#ee1c24" stroke="#000" stroke-width=".8"/><path d="M15.2 3.5L8 6.2V15.2L15.2 12.5Z" fill="#c8c8c8" stroke="#000" stroke-width=".8"/></svg>
<svg class="a" style="left:340px;top:386px;" width="16" height="16" viewBox="0 0 16 16"><path d="M8 .8L15.2 3.5V12.5L8 15.2L.8 12.5V3.5Z" fill="#c8c8c8" stroke="#000" stroke-width="1"/><path d="M.8 3.5L8 6.2L15.2 3.5L8 .8Z" fill="#c8c8c8" stroke="#000" stroke-width=".8"/><path d="M.8 3.5L8 6.2V15.2L.8 12.5Z" fill="#c8c8c8" stroke="#000" stroke-width=".8"/><path d="M15.2 3.5L8 6.2V15.2L15.2 12.5Z" fill="#c8c8c8" stroke="#000" stroke-width=".8"/><path d="M8 .8L15.2 3.5V9L8 11Z" fill="#ee1c24"/><path d="M8 1V15M.8 3.5L8 6.2L15.2 3.5" stroke="#000" stroke-width=".8" fill="none"/></svg>
<svg class="a" style="left:363px;top:386px;" width="16" height="16" viewBox="0 0 16 16"><path d="M8 .8L15.2 3.5V12.5L8 15.2L.8 12.5V3.5Z" fill="#c8c8c8" stroke="#000" stroke-width="1"/><path d="M.8 3.5L8 6.2L15.2 3.5L8 .8Z" fill="#c8c8c8" stroke="#000" stroke-width=".8"/><path d="M.8 3.5L8 6.2V15.2L.8 12.5Z" fill="#c8c8c8" stroke="#000" stroke-width=".8"/><path d="M15.2 3.5L8 6.2V15.2L15.2 12.5Z" fill="#ee1c24" stroke="#000" stroke-width=".8"/></svg>
<svg class="a" style="left:386px;top:386px;" width="16" height="16" viewBox="0 0 16 16"><path d="M8 .8L15.2 3.5V12.5L8 15.2L.8 12.5V3.5Z" fill="#c8c8c8" stroke="#000" stroke-width="1"/><path d="M.8 3.5L8 6.2L15.2 3.5L8 .8Z" fill="#c8c8c8" stroke="#000" stroke-width=".8"/><path d="M.8 3.5L8 6.2V15.2L.8 12.5Z" fill="#c8c8c8" stroke="#000" stroke-width=".8"/><path d="M15.2 3.5L8 6.2V15.2L15.2 12.5Z" fill="#c8c8c8" stroke="#000" stroke-width=".8"/><path d="M.8 3.5L8 .8V6.5L.8 10Z" fill="#ee1c24"/><path d="M8 1V15M.8 3.5L8 6.2L15.2 3.5" stroke="#000" stroke-width=".8" fill="none"/></svg>
<svg class="a" style="left:409px;top:386px;" width="16" height="16" viewBox="0 0 16 16"><path d="M8 .8L15.2 3.5V12.5L8 15.2L.8 12.5V3.5Z" fill="#c8c8c8" stroke="#000" stroke-width="1"/><path d="M.8 3.5L8 6.2L15.2 3.5L8 .8Z" fill="#ee1c24" stroke="#000" stroke-width=".8"/><path d="M.8 3.5L8 6.2V15.2L.8 12.5Z" fill="#c8c8c8" stroke="#000" stroke-width=".8"/><path d="M15.2 3.5L8 6.2V15.2L15.2 12.5Z" fill="#c8c8c8" stroke="#000" stroke-width=".8"/></svg>
<svg class="a" style="left:432px;top:386px;" width="16" height="16" viewBox="0 0 16 16"><path d="M8 .8L15.2 3.5V12.5L8 15.2L.8 12.5V3.5Z" fill="#c8c8c8" stroke="#000" stroke-width="1"/><path d="M.8 3.5L8 6.2L15.2 3.5L8 .8Z" fill="#c8c8c8" stroke="#000" stroke-width=".8"/><path d="M.8 3.5L8 6.2V15.2L.8 12.5Z" fill="#c8c8c8" stroke="#000" stroke-width=".8"/><path d="M15.2 3.5L8 6.2V15.2L15.2 12.5Z" fill="#c8c8c8" stroke="#000" stroke-width=".8"/><path d="M.8 12.5L8 9.8L15.2 12.5L8 15.2Z" fill="#ee1c24"/><path d="M8 1V15" stroke="#000" stroke-width=".8"/></svg>
<svg class="a" style="left:262px;top:384px" width="386" height="391" viewBox="263 385 386 391"><defs><linearGradient id="pg" x1="0" y1="0" x2="1" y2="0"><stop offset="0" stop-color="#5a5a5a"/><stop offset=".12" stop-color="#8a8a8a"/><stop offset=".4" stop-color="#b8b8b8"/><stop offset=".6" stop-color="#a8a8a8"/><stop offset=".9" stop-color="#6e6e6e"/><stop offset="1" stop-color="#505050"/></linearGradient></defs><path d="M372.8 673.4L432 622L525.4 624.7L492.6 711.7Z" fill="#903838" fill-opacity=".48"/><path d="M421.7 490L435.0 490L441.5 620.0L432.5 620.0Z" fill="url(#pg)"/><ellipse cx="437" cy="620" rx="4.5" ry="2.25" fill="#8a8a8a"/><path d="M457.0 490L470.2 490L469.5 627.0L460.5 627.0Z" fill="url(#pg)"/><ellipse cx="465" cy="627" rx="4.5" ry="2.25" fill="#8a8a8a"/><path d="M495.9 490L507.8 490L495.9 634.0L487.4 634.0Z" fill="url(#pg)"/><ellipse cx="491.6" cy="634" rx="4.25" ry="2.125" fill="#8a8a8a"/><path d="M412.6 490L426.7 490L431.6 639.7L421.6 639.7Z" fill="url(#pg)"/><ellipse cx="426.6" cy="639.7" rx="5.0" ry="2.5" fill="#8a8a8a"/><path d="M446.9 490L462.1 490L459.6 647.0L449.1 647.0Z" fill="url(#pg)"/><ellipse cx="454.4" cy="647" rx="5.25" ry="2.625" fill="#8a8a8a"/><path d="M484.6 490L497.4 490L487.6 655.0L478.1 655.0Z" fill="url(#pg)"/><ellipse cx="482.8" cy="655" rx="4.75" ry="2.375" fill="#8a8a8a"/><path d="M394.9 490L412.3 490L421.8 659.6L410.2 659.6Z" fill="url(#pg)"/><ellipse cx="416" cy="659.6" rx="5.75" ry="2.875" fill="#8a8a8a"/><path d="M429.3 490L446.6 490L448.4 668.0L436.9 668.0Z" fill="url(#pg)"/><ellipse cx="442.7" cy="668" rx="5.75" ry="2.875" fill="#8a8a8a"/><path d="M469.0 490L485.5 490L477.5 676.0L465.5 676.0Z" fill="url(#pg)"/><ellipse cx="471.5" cy="676" rx="6.0" ry="3.0" fill="#8a8a8a"/><path d="M371.5 660.8L430 610L526.7 612L494 697.8Z" fill="#d83030" fill-opacity=".55"/><path d="M421.7 490L435.0 490L441.0 610.0L431.7 610.0Z" fill="url(#pg)"/><path d="M457.0 490L470.2 490L469.6 617.0L460.2 617.0Z" fill="url(#pg)"/><path d="M495.9 490L507.8 490L496.7 624.0L487.9 624.0Z" fill="url(#pg)"/><path d="M412.6 490L426.7 490L431.3 629.7L421.0 629.7Z" fill="url(#pg)"/><path d="M446.9 490L462.1 490L459.8 637.0L449.0 637.0Z" fill="url(#pg)"/><path d="M484.6 490L497.4 490L488.1 645.0L478.4 645.0Z" fill="url(#pg)"/><path d="M394.9 490L412.3 490L421.2 649.6L409.3 649.6Z" fill="url(#pg)"/><path d="M429.3 490L446.6 490L448.3 658.0L436.5 658.0Z" fill="url(#pg)"/><path d="M469.0 490L485.5 490L477.9 666.0L465.7 666.0Z" fill="url(#pg)"/><path d="M361.4 600.2L425 538L535.5 552.8L501.5 636Z" fill="#702424" fill-opacity=".5"/><path d="M421.7 490L435.0 490L438.0 550.0L426.7 550.0Z" fill="url(#pg)"/><path d="M457.0 490L470.2 490L469.9 557.0L458.7 557.0Z" fill="url(#pg)"/><path d="M495.9 490L507.8 490L501.7 564.0L491.5 564.0Z" fill="url(#pg)"/><path d="M412.6 490L426.7 490L429.3 569.7L417.4 569.7Z" fill="url(#pg)"/><path d="M446.9 490L462.1 490L460.8 577.0L448.2 577.0Z" fill="url(#pg)"/><path d="M484.6 490L497.4 490L491.7 585.0L480.8 585.0Z" fill="url(#pg)"/><path d="M394.9 490L412.3 490L417.8 589.6L403.9 589.6Z" fill="url(#pg)"/><path d="M429.3 490L446.6 490L447.7 598.0L433.9 598.0Z" fill="url(#pg)"/><path d="M469.0 490L485.5 490L480.5 606.0L466.8 606.0Z" fill="url(#pg)"/><path d="M345.3 493.6L415 446L548 454.5L501.5 525Z" fill="#4646c8" fill-opacity=".5"/><path d="M380 459.6L489 477L488.5 504.8L381.6 486.5Z" fill="#d2d2d2"/><path d="M380 459.6L489 477L489 481L380.2 463.5Z" fill="#e2e2e2"/><path d="M489 477L520.5 435.3L519.6 466L488.5 504.8Z" fill="#7a7a7a"/><path d="M380 459.6L425 424L520.5 435.3L489 477Z" fill="#8c8c8c"/><path d="M417.8 426.5L435.9 412.4L484 419.4L473.6 430.5Z" fill="#5c5c5c"/><path d="M417.8 424.5L473.6 430.5L473.6 434.5L419 428.5Z" fill="#a8a8a8"/><path d="M423 428.2L473.6 434L473.6 455L424 447.7Z" fill="#9c9c9c"/><path d="M473.6 430.5L484 419.4L484 443.6L473.6 455Z" fill="#6a6a6a"/><path d="M391 490L405.3 658.5L412.7 660M426 490L432 666L439.4 668M463.3 490L459.8 674L467.8 676.6" stroke="#0000ff" fill="none" stroke-width=".9"/><path d="M369 457 L425.3 411 L435 412.5" stroke="#0000ff" fill="none" stroke-width=".9"/><path d="M369 457 L372 484" stroke="#0000ff" fill="none" stroke-width=".9"/><path d="M369 457 L379 458.7 L373.6 464.2 L485.1 483 L490.2 477.4 L502.8 479.3" stroke="#0000ff" fill="none" stroke-width=".9"/><path d="M372 484 L381.7 487.4 L376.6 491.5 L483.9 510.8 L488.9 505.8 L500.3 507" stroke="#0000ff" fill="none" stroke-width=".9"/><path d="M483.9 425.7 L523 431.3 L522.3 433.9 L531.8 436.4 L529.3 461 L500.3 507 L502.8 479.3 L531.8 436.4" stroke="#0000ff" fill="none" stroke-width=".9"/><path d="M519.8 459.7 L529.3 461" stroke="#0000ff" fill="none" stroke-width=".9"/><path d="M417.4 428.2 L460 433" stroke="#0000ff" fill="none" stroke-width=".9"/><path d="M414.7 421.2 L424.4 421.2" stroke="#0000ff" fill="none" stroke-width=".9"/></svg>
<div class="a" style="left:543px;top:614px;width:295px;height:133px;border-radius:8px;background:#f3f3f3;border:1px solid #bdbdbd;box-shadow:0 10px 28px rgba(0,0,0,.20),0 0 6px rgba(0,0,0,.10)"></div>
<div class="t" id="x53" style="left:553px;top:624px;font-size:13px;transform:scaleX(0.9150);color:#9a9a9a">3D属性</div>
<svg class="a" style="left:816px;top:623px;" width="12" height="12" viewBox="0 0 12 12"><path d="M1 1L11 11M11 1L1 11" stroke="#8a8a8a" stroke-width="1"/></svg>
<div class="a" style="left:544px;top:646px;width:288px;height:1px;background:#8a8a8a"></div>
<div class="a" style="left:545px;top:647px;width:1px;height:96px;background:#222"></div>
<div class="a" style="left:546px;top:743px;width:286px;height:2px;background:#fff"></div>
<div class="a" style="left:546px;top:647px;width:151px;height:16px;background:#e3e3e3;border-top:1px solid #fff;border-left:1px solid #fff;border-right:1px solid #000;border-bottom:1px solid #000"></div>
<div class="t" id="x54" style="left:602.85px;top:648px;font-size:12px;transform:scaleX(0.9806);">属性値</div>
<div class="a" style="left:697px;top:647px;width:85px;height:16px;background:#e3e3e3;border-top:1px solid #fff;border-left:1px solid #fff;border-right:1px solid #000;border-bottom:1px solid #000"></div>
<div class="t" id="x55" style="left:725.85px;top:648px;font-size:12px;transform:scaleX(1.0958);">単位</div>
<div class="a" style="left:782px;top:647px;width:50px;height:16px;background:#e3e3e3;border-top:1px solid #fff;border-left:1px solid #fff;border-right:1px solid #d0d0d0;border-bottom:1px solid #000"></div>
<div class="t" id="x56" style="left:798.75px;top:648px;font-size:12px;transform:scaleX(1.2917);">値</div>
<div class="a" style="left:546px;top:663px;width:151px;height:16px;background:#e3e3e3;border-top:1px solid #fff;border-left:1px solid #fff;border-right:1px solid #000;border-bottom:1px solid #000"></div>
<div class="t" id="x57" style="left:596.55px;top:664px;font-size:12px;transform:scaleX(0.9979);">基礎形式</div>
<div class="a" style="left:697px;top:663px;width:85px;height:16px;background:#e3e3e3;border-top:1px solid #fff;border-left:1px solid #fff;border-right:1px solid #000;border-bottom:1px solid #000"></div>
<div class="t" id="x58" style="left:724.2px;top:664px;font-size:12px;transform:scaleX(1.4812);">-----</div>
<div class="a" style="left:782px;top:663px;width:50px;height:16px;background:#fff;border-bottom:1px solid #d8d8d8;border-right:1px solid #d8d8d8"></div>
<div class="t" id="x59" style="left:788.5px;top:664px;font-size:12px;transform:scaleX(1.0000);">杭基礎</div>
<div class="a" style="left:546px;top:679px;width:151px;height:16px;background:#e3e3e3;border-top:1px solid #fff;border-left:1px solid #fff;border-right:1px solid #000;border-bottom:1px solid #000"></div>
<div class="t" id="x60" style="left:553.5px;top:680px;font-size:12px;transform:scaleX(0.9571);">設計基準強度(フーチング)</div>
<div class="a" style="left:697px;top:679px;width:85px;height:16px;background:#e3e3e3;border-top:1px solid #fff;border-left:1px solid #fff;border-right:1px solid #000;border-bottom:1px solid #000"></div>
<div class="t" id="x61" style="left:720.9px;top:680px;font-size:12px;transform:scaleX(1.0056);">N/mm²</div>
<div class="a" style="left:782px;top:679px;width:50px;height:16px;background:#fff;border-bottom:1px solid #d8d8d8;border-right:1px solid #d8d8d8"></div>
<div class="t" id="x62" style="left:801.0px;top:680px;font-size:12px;transform:scaleX(0.8234);">24</div>
<div class="a" style="left:546px;top:695px;width:151px;height:16px;background:#e3e3e3;border-top:1px solid #fff;border-left:1px solid #fff;border-right:1px solid #000;border-bottom:1px solid #000"></div>
<div class="t" id="x63" style="left:559.6px;top:696px;font-size:12px;transform:scaleX(0.9516);">主鉄筋材質(フーチング)</div>
<div class="a" style="left:697px;top:695px;width:85px;height:16px;background:#e3e3e3;border-top:1px solid #fff;border-left:1px solid #fff;border-right:1px solid #000;border-bottom:1px solid #000"></div>
<div class="t" id="x64" style="left:724.2px;top:696px;font-size:12px;transform:scaleX(1.4812);">-----</div>
<div class="a" style="left:782px;top:695px;width:50px;height:16px;background:#fff;border-bottom:1px solid #d8d8d8;border-right:1px solid #d8d8d8"></div>
<div class="t" id="x65" style="left:790.15px;top:696px;font-size:12px;transform:scaleX(0.8909);">SD345</div>
<div class="a" style="left:546px;top:711px;width:151px;height:16px;background:#e3e3e3;border-top:1px solid #fff;border-left:1px solid #fff;border-right:1px solid #000;border-bottom:1px solid #000"></div>
<div class="t" id="x66" style="left:574.05px;top:712px;font-size:12px;transform:scaleX(1.0098);">設計基準強度(杭)</div>
<div class="a" style="left:697px;top:711px;width:85px;height:16px;background:#e3e3e3;border-top:1px solid #fff;border-left:1px solid #fff;border-right:1px solid #000;border-bottom:1px solid #000"></div>
<div class="t" id="x67" style="left:720.9px;top:712px;font-size:12px;transform:scaleX(1.0056);">N/mm²</div>
<div class="a" style="left:782px;top:711px;width:50px;height:16px;background:#fff;border-bottom:1px solid #d8d8d8;border-right:1px solid #d8d8d8"></div>
<div class="t" id="x68" style="left:801.0px;top:712px;font-size:12px;transform:scaleX(0.8234);">24</div>
<div class="a" style="left:546px;top:727px;width:151px;height:16px;background:#e3e3e3;border-top:1px solid #fff;border-left:1px solid #fff;border-right:1px solid #000;border-bottom:1px solid #000"></div>
<div class="t" id="x69" style="left:580.5px;top:728px;font-size:12px;transform:scaleX(1.0000);">主鉄筋材質(杭)</div>
<div class="a" style="left:697px;top:727px;width:85px;height:16px;background:#e3e3e3;border-top:1px solid #fff;border-left:1px solid #fff;border-right:1px solid #000;border-bottom:1px solid #000"></div>
<div class="t" id="x70" style="left:724.2px;top:728px;font-size:12px;transform:scaleX(1.4812);">-----</div>
<div class="a" style="left:782px;top:727px;width:50px;height:16px;background:#fff;border-bottom:1px solid #d8d8d8;border-right:1px solid #d8d8d8"></div>
<div class="t" id="x71" style="left:790.15px;top:728px;font-size:12px;transform:scaleX(0.8909);">SD345</div>
</div></body></html>
